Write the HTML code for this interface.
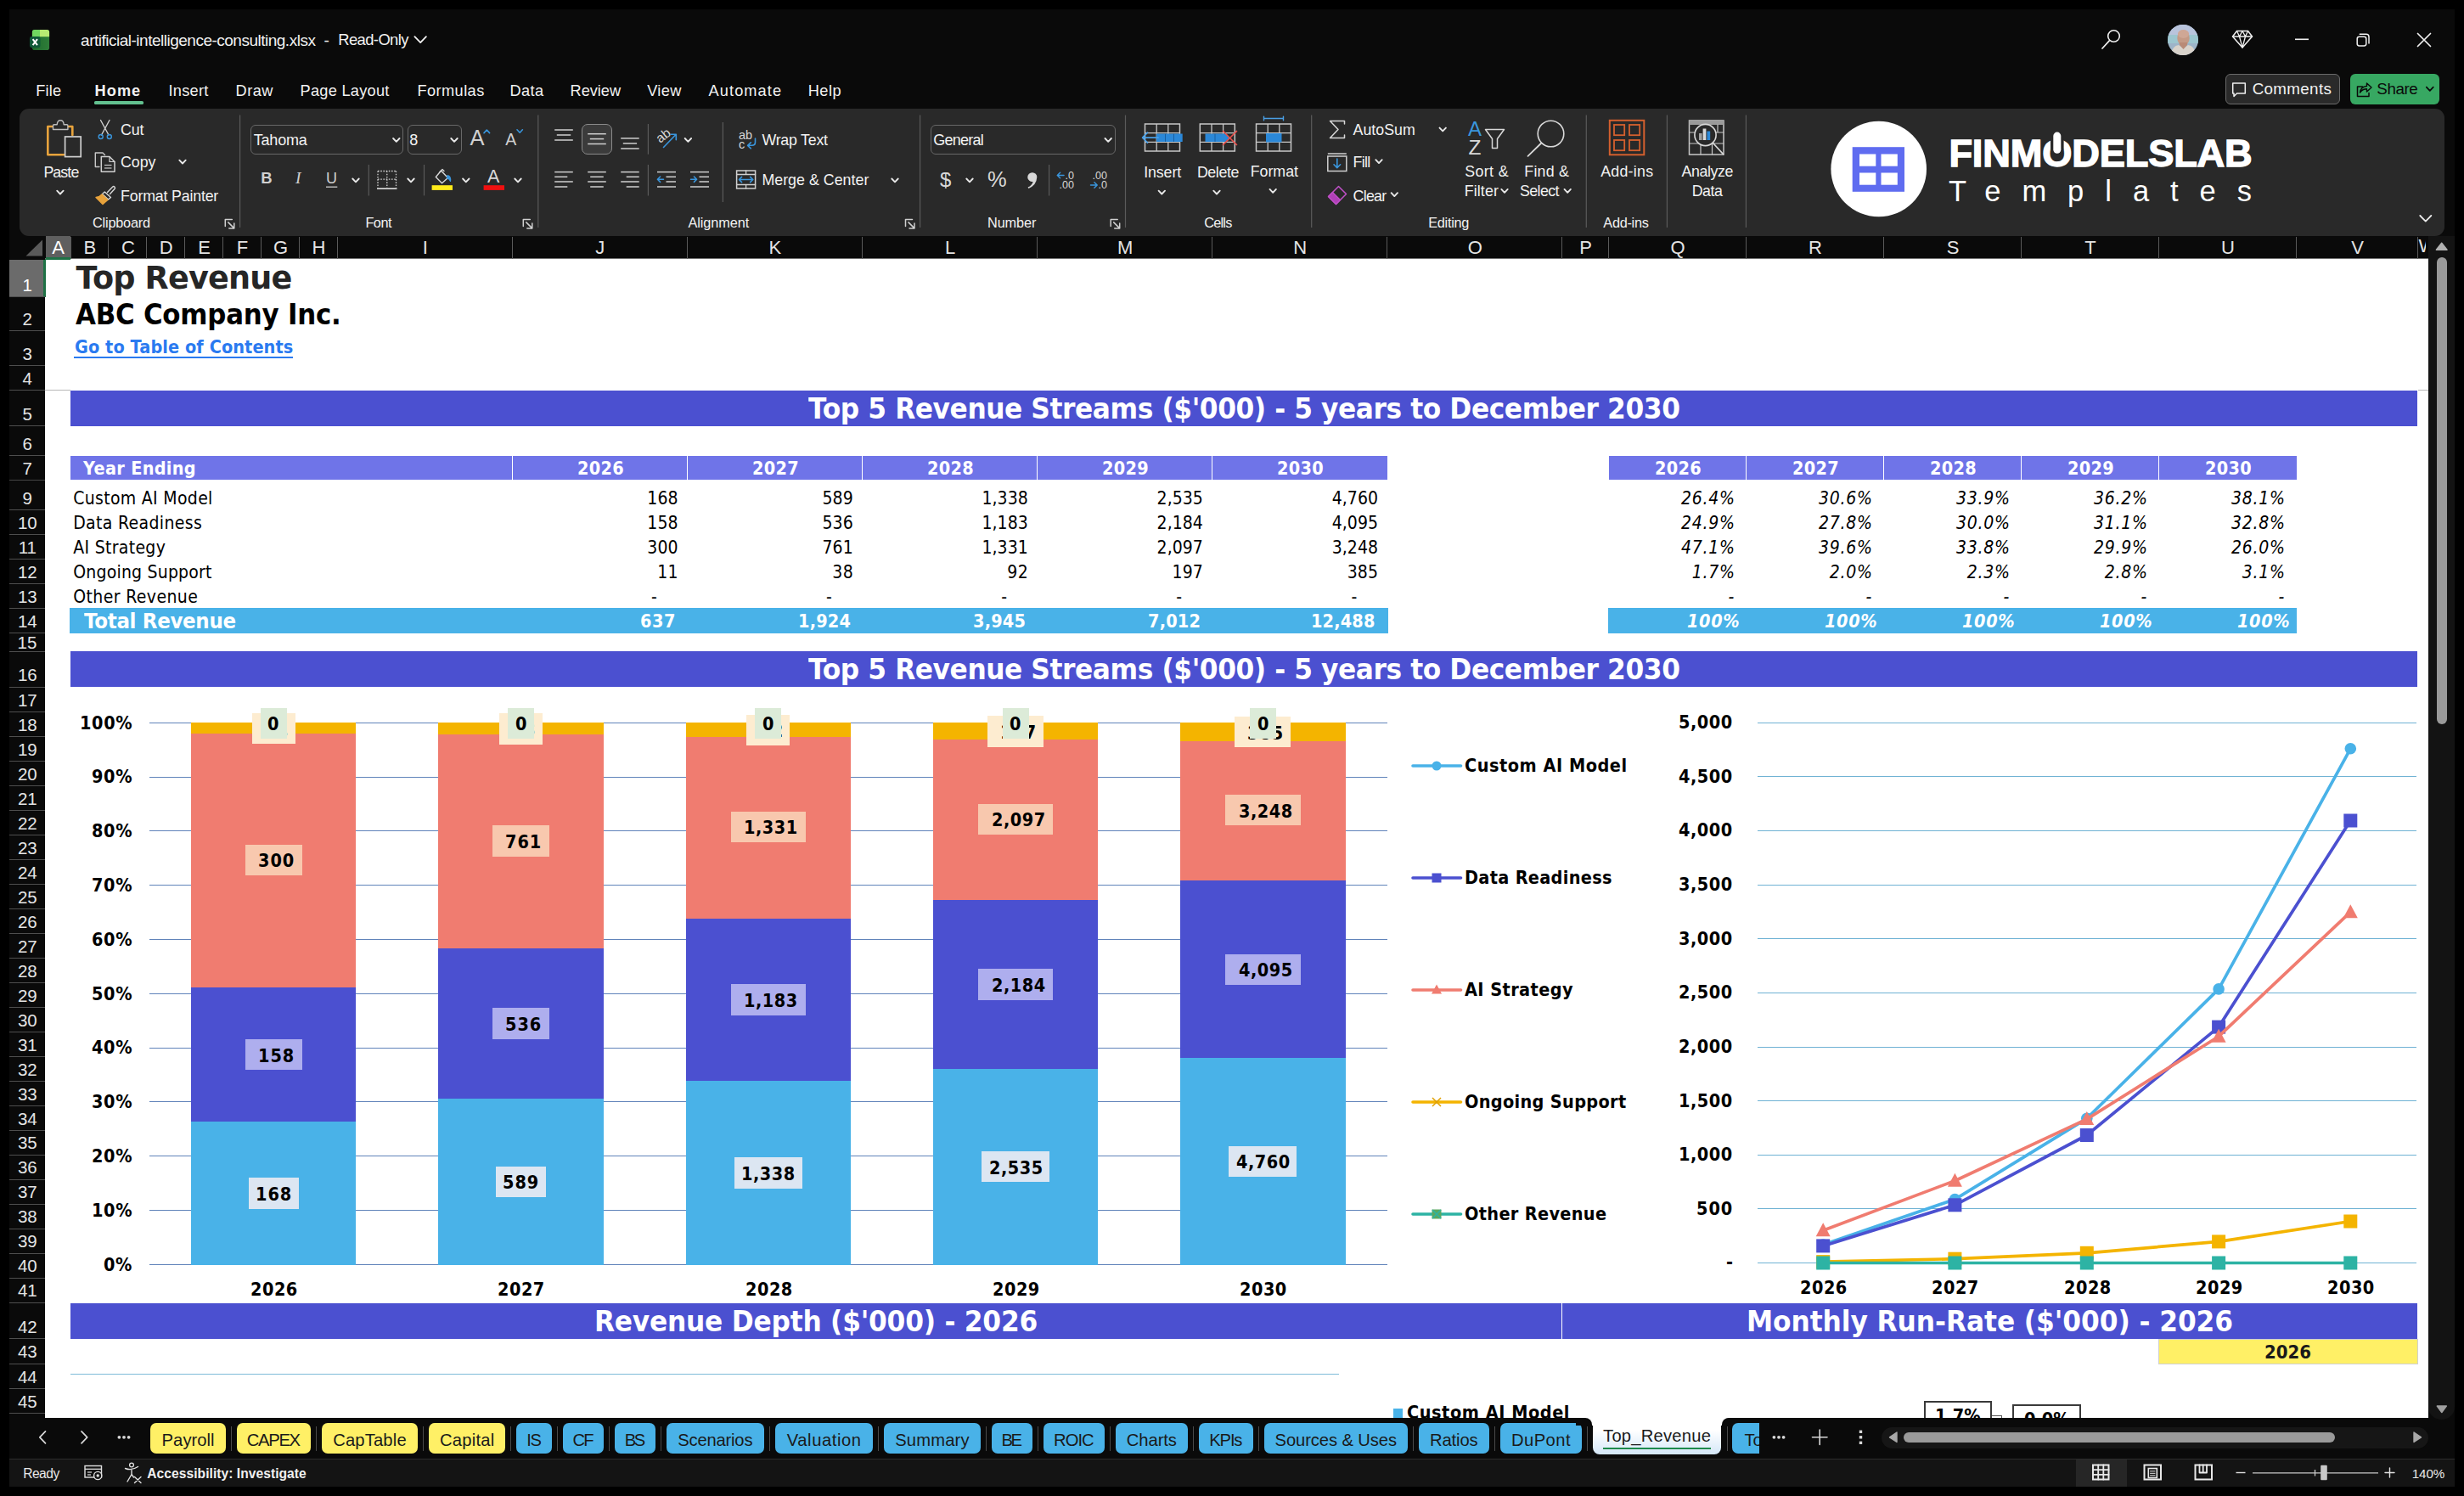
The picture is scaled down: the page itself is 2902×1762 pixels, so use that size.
<!DOCTYPE html>
<html><head><meta charset="utf-8"><title>Top Revenue - Excel</title>
<style>
html,body{margin:0;padding:0;}
body{width:2902px;height:1762px;background:#000;position:relative;overflow:hidden;font-family:"Liberation Sans", sans-serif;}
svg{position:absolute;overflow:visible;}
</style></head><body>
<div style="position:absolute;left:11.00px;top:10.70px;width:2880.00px;height:1740.30px;background:#0a0a0a;"></div>
<svg style="left:0;top:0" width="70" height="70">
<defs><linearGradient id="xg" x1="0" y1="0" x2="1" y2="0"><stop offset="0" stop-color="#1d6b2c"/><stop offset="1" stop-color="#2f7d39"/></linearGradient></defs>
<rect x="37.9" y="34.9" width="20.2" height="24.2" rx="2.8" fill="url(#xg)"/>
<path d="M37.9 43.2V37.7Q37.9 34.9 40.7 34.9H47V43.2Z" fill="#70d860"/>
<path d="M47 34.9H55.3Q58.1 34.9 58.1 37.7V43.2H47Z" fill="#b8ea72"/>
<rect x="35" y="43" width="12.5" height="13.2" rx="2.4" fill="#0f5a38"/>
<path d="M38.6 46.1L44 53.1M44 46.1L38.6 53.1" stroke="#fff" stroke-width="2" fill="none"/></svg>
<span style="position:absolute;left:95.10px;top:37.93px;font-family:&quot;Liberation Sans&quot;, sans-serif;font-size:19px;line-height:1;white-space:pre;color:#f2f2f2;letter-spacing:-0.497px;">artificial-intelligence-consulting.xlsx</span>
<span style="position:absolute;left:381.50px;top:37.93px;font-family:&quot;Liberation Sans&quot;, sans-serif;font-size:19px;line-height:1;white-space:pre;color:#f2f2f2;">-</span>
<span style="position:absolute;left:398.30px;top:38.43px;font-family:&quot;Liberation Sans&quot;, sans-serif;font-size:18.4px;line-height:1;white-space:pre;color:#f2f2f2;letter-spacing:-0.601px;">Read-Only</span>
<div style="position:absolute;left:2621.30px;top:87.40px;width:134.70px;height:35.30px;background:#2a2a2a;border:1.3px solid #6a6a6a;border-radius:6px;box-sizing:border-box;"></div>
<span style="position:absolute;left:2652.70px;top:96.40px;font-family:&quot;Liberation Sans&quot;, sans-serif;font-size:18.8px;line-height:1;white-space:pre;color:#f2f2f2;letter-spacing:0.336px;">Comments</span>
<div style="position:absolute;left:2768.20px;top:87.40px;width:104.70px;height:35.30px;background:#37a862;border-radius:6px;"></div>
<span style="position:absolute;left:2799.30px;top:96.40px;font-family:&quot;Liberation Sans&quot;, sans-serif;font-size:18.8px;line-height:1;white-space:pre;color:#0a0a0a;letter-spacing:-0.425px;">Share</span>
<span style="position:absolute;left:42.30px;top:98.20px;font-family:&quot;Liberation Sans&quot;, sans-serif;font-size:18.2px;line-height:1;white-space:pre;color:#f2f2f2;letter-spacing:0.147px;">File</span>
<span style="position:absolute;left:111.50px;top:98.20px;font-family:&quot;Liberation Sans&quot;, sans-serif;font-size:18.2px;line-height:1;white-space:pre;color:#f2f2f2;font-weight:700;letter-spacing:1.067px;">Home</span>
<span style="position:absolute;left:198.50px;top:98.20px;font-family:&quot;Liberation Sans&quot;, sans-serif;font-size:18.2px;line-height:1;white-space:pre;color:#f2f2f2;letter-spacing:0.267px;">Insert</span>
<span style="position:absolute;left:277.60px;top:98.20px;font-family:&quot;Liberation Sans&quot;, sans-serif;font-size:18.2px;line-height:1;white-space:pre;color:#f2f2f2;letter-spacing:0.487px;">Draw</span>
<span style="position:absolute;left:353.50px;top:98.20px;font-family:&quot;Liberation Sans&quot;, sans-serif;font-size:18.2px;line-height:1;white-space:pre;color:#f2f2f2;letter-spacing:0.278px;">Page Layout</span>
<span style="position:absolute;left:491.40px;top:98.20px;font-family:&quot;Liberation Sans&quot;, sans-serif;font-size:18.2px;line-height:1;white-space:pre;color:#f2f2f2;letter-spacing:0.438px;">Formulas</span>
<span style="position:absolute;left:600.40px;top:98.20px;font-family:&quot;Liberation Sans&quot;, sans-serif;font-size:18.2px;line-height:1;white-space:pre;color:#f2f2f2;letter-spacing:0.395px;">Data</span>
<span style="position:absolute;left:671.60px;top:98.20px;font-family:&quot;Liberation Sans&quot;, sans-serif;font-size:18.2px;line-height:1;white-space:pre;color:#f2f2f2;letter-spacing:-0.040px;">Review</span>
<span style="position:absolute;left:762.20px;top:98.20px;font-family:&quot;Liberation Sans&quot;, sans-serif;font-size:18.2px;line-height:1;white-space:pre;color:#f2f2f2;letter-spacing:0.377px;">View</span>
<span style="position:absolute;left:834.60px;top:98.20px;font-family:&quot;Liberation Sans&quot;, sans-serif;font-size:18.2px;line-height:1;white-space:pre;color:#f2f2f2;letter-spacing:1.080px;">Automate</span>
<span style="position:absolute;left:951.70px;top:98.20px;font-family:&quot;Liberation Sans&quot;, sans-serif;font-size:18.2px;line-height:1;white-space:pre;color:#f2f2f2;letter-spacing:0.523px;">Help</span>
<div style="position:absolute;left:111.20px;top:119.40px;width:58.00px;height:3.20px;background:#62c08f;border-radius:1.6px;"></div>
<div style="position:absolute;left:23.00px;top:127.80px;width:2856.00px;height:150.00px;background:#292929;border-radius:11px;"></div>
<span style="position:absolute;left:51.40px;top:195.34px;font-family:&quot;Liberation Sans&quot;, sans-serif;font-size:17.8px;line-height:1;white-space:pre;color:#f2f2f2;letter-spacing:-0.897px;">Paste</span>
<span style="position:absolute;left:142.00px;top:144.74px;font-family:&quot;Liberation Sans&quot;, sans-serif;font-size:17.8px;line-height:1;white-space:pre;color:#f2f2f2;letter-spacing:-0.091px;">Cut</span>
<span style="position:absolute;left:142.00px;top:183.14px;font-family:&quot;Liberation Sans&quot;, sans-serif;font-size:17.8px;line-height:1;white-space:pre;color:#f2f2f2;letter-spacing:-0.029px;">Copy</span>
<span style="position:absolute;left:142.00px;top:222.64px;font-family:&quot;Liberation Sans&quot;, sans-serif;font-size:17.8px;line-height:1;white-space:pre;color:#f2f2f2;letter-spacing:-0.178px;">Format Painter</span>
<span style="position:absolute;left:109.00px;top:254.21px;font-family:&quot;Liberation Sans&quot;, sans-serif;font-size:16.3px;line-height:1;white-space:pre;color:#f2f2f2;letter-spacing:-0.200px;">Clipboard</span>
<div style="position:absolute;left:295.30px;top:146.50px;width:180.00px;height:35.10px;background:#292929;border:1.2px solid #686868;border-radius:6px;box-sizing:border-box;"></div>
<span style="position:absolute;left:298.70px;top:155.97px;font-family:&quot;Liberation Sans&quot;, sans-serif;font-size:18px;line-height:1;white-space:pre;color:#f2f2f2;letter-spacing:-0.191px;">Tahoma</span>
<div style="position:absolute;left:479.50px;top:146.50px;width:64.10px;height:35.10px;background:#292929;border:1.2px solid #686868;border-radius:6px;box-sizing:border-box;"></div>
<span style="position:absolute;left:482.30px;top:155.97px;font-family:&quot;Liberation Sans&quot;, sans-serif;font-size:18px;line-height:1;white-space:pre;color:#f2f2f2;">8</span>
<span style="position:absolute;left:553.60px;top:149.63px;font-family:&quot;Liberation Sans&quot;, sans-serif;font-size:25.5px;line-height:1;white-space:pre;color:#d0d0d0;">A</span>
<span style="position:absolute;left:595.20px;top:154.70px;font-family:&quot;Liberation Sans&quot;, sans-serif;font-size:19.5px;line-height:1;white-space:pre;color:#d0d0d0;">A</span>
<span style="position:absolute;left:307.30px;top:200.95px;font-family:&quot;Liberation Sans&quot;, sans-serif;font-size:18.5px;line-height:1;white-space:pre;color:#d0d0d0;font-weight:700;">B</span>
<span style="position:absolute;left:348.00px;top:200.10px;font-family:&quot;Liberation Sans&quot;, sans-serif;font-size:19.5px;line-height:1;white-space:pre;color:#d0d0d0;font-style:italic;font-family:&quot;Liberation Serif&quot;,serif;">I</span>
<span style="position:absolute;left:384.00px;top:200.97px;font-family:&quot;Liberation Sans&quot;, sans-serif;font-size:18px;line-height:1;white-space:pre;color:#d0d0d0;">U</span>
<span style="position:absolute;left:574.00px;top:197.81px;font-family:&quot;Liberation Sans&quot;, sans-serif;font-size:21.5px;line-height:1;white-space:pre;color:#d8d8d8;letter-spacing:1.256px;">A</span>
<span style="position:absolute;left:430.40px;top:254.21px;font-family:&quot;Liberation Sans&quot;, sans-serif;font-size:16.3px;line-height:1;white-space:pre;color:#f2f2f2;letter-spacing:-0.498px;">Font</span>
<div style="position:absolute;left:685.20px;top:146.00px;width:35.60px;height:35.80px;background:#3b3b3b;border:1.2px solid #8a8a8a;border-radius:7px;box-sizing:border-box;"></div>
<span style="position:absolute;left:897.40px;top:156.94px;font-family:&quot;Liberation Sans&quot;, sans-serif;font-size:17.8px;line-height:1;white-space:pre;color:#f2f2f2;letter-spacing:-0.221px;">Wrap Text</span>
<span style="position:absolute;left:897.40px;top:204.44px;font-family:&quot;Liberation Sans&quot;, sans-serif;font-size:17.8px;line-height:1;white-space:pre;color:#f2f2f2;letter-spacing:0.035px;">Merge &amp; Center</span>
<span style="position:absolute;left:810.40px;top:254.21px;font-family:&quot;Liberation Sans&quot;, sans-serif;font-size:16.3px;line-height:1;white-space:pre;color:#f2f2f2;letter-spacing:-0.056px;">Alignment</span>
<div style="position:absolute;left:1096.00px;top:146.50px;width:217.50px;height:35.10px;background:#292929;border:1.2px solid #686868;border-radius:6px;box-sizing:border-box;"></div>
<span style="position:absolute;left:1099.20px;top:155.97px;font-family:&quot;Liberation Sans&quot;, sans-serif;font-size:18px;line-height:1;white-space:pre;color:#f2f2f2;letter-spacing:-0.750px;">General</span>
<span style="position:absolute;left:1107.00px;top:199.70px;font-family:&quot;Liberation Sans&quot;, sans-serif;font-size:24px;line-height:1;white-space:pre;color:#d8d8d8;">$</span>
<span style="position:absolute;left:1163.00px;top:198.73px;font-family:&quot;Liberation Sans&quot;, sans-serif;font-size:25.5px;line-height:1;white-space:pre;color:#d8d8d8;letter-spacing:0.812px;">%</span>
<span style="position:absolute;left:1163.00px;top:254.21px;font-family:&quot;Liberation Sans&quot;, sans-serif;font-size:16.3px;line-height:1;white-space:pre;color:#f2f2f2;letter-spacing:-0.104px;">Number</span>
<span style="position:absolute;left:1347.30px;top:195.34px;font-family:&quot;Liberation Sans&quot;, sans-serif;font-size:17.8px;line-height:1;white-space:pre;color:#f2f2f2;letter-spacing:-0.131px;">Insert</span>
<span style="position:absolute;left:1409.90px;top:195.34px;font-family:&quot;Liberation Sans&quot;, sans-serif;font-size:17.8px;line-height:1;white-space:pre;color:#f2f2f2;letter-spacing:-0.384px;">Delete</span>
<span style="position:absolute;left:1472.70px;top:193.54px;font-family:&quot;Liberation Sans&quot;, sans-serif;font-size:17.8px;line-height:1;white-space:pre;color:#f2f2f2;letter-spacing:-0.005px;">Format</span>
<span style="position:absolute;left:1418.20px;top:254.21px;font-family:&quot;Liberation Sans&quot;, sans-serif;font-size:16.3px;line-height:1;white-space:pre;color:#f2f2f2;letter-spacing:-0.761px;">Cells</span>
<span style="position:absolute;left:1593.50px;top:144.74px;font-family:&quot;Liberation Sans&quot;, sans-serif;font-size:17.8px;line-height:1;white-space:pre;color:#f2f2f2;letter-spacing:0.023px;">AutoSum</span>
<span style="position:absolute;left:1593.50px;top:183.14px;font-family:&quot;Liberation Sans&quot;, sans-serif;font-size:17.8px;line-height:1;white-space:pre;color:#f2f2f2;letter-spacing:-0.680px;">Fill</span>
<span style="position:absolute;left:1593.50px;top:222.64px;font-family:&quot;Liberation Sans&quot;, sans-serif;font-size:17.8px;line-height:1;white-space:pre;color:#f2f2f2;letter-spacing:-0.700px;">Clear</span>
<span style="position:absolute;left:1725.20px;top:193.54px;font-family:&quot;Liberation Sans&quot;, sans-serif;font-size:17.8px;line-height:1;white-space:pre;color:#f2f2f2;letter-spacing:0.396px;">Sort &amp;</span>
<span style="position:absolute;left:1724.70px;top:217.44px;font-family:&quot;Liberation Sans&quot;, sans-serif;font-size:17.8px;line-height:1;white-space:pre;color:#f2f2f2;letter-spacing:0.131px;">Filter</span>
<span style="position:absolute;left:1795.30px;top:193.54px;font-family:&quot;Liberation Sans&quot;, sans-serif;font-size:17.8px;line-height:1;white-space:pre;color:#f2f2f2;letter-spacing:0.218px;">Find &amp;</span>
<span style="position:absolute;left:1790.00px;top:217.44px;font-family:&quot;Liberation Sans&quot;, sans-serif;font-size:17.8px;line-height:1;white-space:pre;color:#f2f2f2;letter-spacing:-0.604px;">Select</span>
<span style="position:absolute;left:1682.30px;top:254.21px;font-family:&quot;Liberation Sans&quot;, sans-serif;font-size:16.3px;line-height:1;white-space:pre;color:#f2f2f2;letter-spacing:-0.300px;">Editing</span>
<span style="position:absolute;left:1885.20px;top:193.54px;font-family:&quot;Liberation Sans&quot;, sans-serif;font-size:17.8px;line-height:1;white-space:pre;color:#f2f2f2;letter-spacing:0.258px;">Add-ins</span>
<span style="position:absolute;left:1888.30px;top:254.21px;font-family:&quot;Liberation Sans&quot;, sans-serif;font-size:16.3px;line-height:1;white-space:pre;color:#f2f2f2;letter-spacing:-0.274px;">Add-ins</span>
<span style="position:absolute;left:1980.50px;top:193.54px;font-family:&quot;Liberation Sans&quot;, sans-serif;font-size:17.8px;line-height:1;white-space:pre;color:#f2f2f2;letter-spacing:-0.395px;">Analyze</span>
<span style="position:absolute;left:1992.70px;top:217.44px;font-family:&quot;Liberation Sans&quot;, sans-serif;font-size:17.8px;line-height:1;white-space:pre;color:#f2f2f2;letter-spacing:-0.416px;">Data</span>
<span style="position:absolute;left:2295.40px;top:157.96px;font-family:&quot;Liberation Sans&quot;, sans-serif;font-size:45.2px;line-height:1;white-space:pre;color:#ffffff;font-weight:700;letter-spacing:-0.147px;-webkit-text-stroke:1.4px #fff;">FINMODELSLAB</span>
<span style="position:absolute;left:2295.00px;top:208.31px;font-family:&quot;Liberation Sans&quot;, sans-serif;font-size:34.5px;line-height:1;white-space:pre;color:#ffffff;letter-spacing:24.972px;">Templates</span>
<svg style="left:0;top:0" width="2902" height="1762"><path d="M488.4 43.1L495.2 50.1L501.9 43.1" fill="none" stroke="#f0f0f0" stroke-width="1.8" stroke-linecap="round" stroke-linejoin="round"/><circle cx="2489.5" cy="42.5" r="6.8" fill="none" stroke="#f0f0f0" stroke-width="1.6"/><path d="M2484.6 47.6L2476.0 57.0" stroke="#f0f0f0" stroke-width="1.7" stroke-linecap="round" fill="none"/><defs><clipPath id="av"><circle cx="2571" cy="47" r="18"/></clipPath></defs>
<g clip-path="url(#av)"><rect x="2553" y="29" width="36" height="36" fill="#9db4c8"/><rect x="2553" y="29" width="36" height="12" fill="#b9c4dc"/>
<rect x="2553" y="41" width="36" height="10" fill="#9cc6cf"/>
<ellipse cx="2571.5" cy="45" rx="7.2" ry="9" fill="#c49a86"/><ellipse cx="2571.5" cy="40" rx="6.6" ry="5" fill="#cfa795"/>
<path d="M2556 66Q2558 54 2566 53L2571.5 57L2577 53Q2585 54 2587 66Z" fill="#d9d3cb"/><path d="M2567 53L2571.5 58L2576 53V50H2567Z" fill="#b98a76"/></g><path d="M2634.5 36.5H2647.5L2652.5 43L2641 56L2629.5 43Z" fill="none" stroke="#f0f0f0" stroke-width="1.5" stroke-linejoin="round" stroke-linecap="round" /><path d="M2629.5 43H2652.5M2634.5 36.5L2637.5 43L2641 56L2644.5 43L2647.5 36.5M2637.5 43L2641 36.5L2644.5 43" fill="none" stroke="#f0f0f0" stroke-width="1.3" stroke-linejoin="round" stroke-linecap="round" /><path d="M2703.0 46.3L2719.0 46.3" stroke="#f0f0f0" stroke-width="1.6" stroke-linecap="butt" fill="none"/><rect x="2776.2" y="43.3" width="10.6" height="10.6" rx="2.4" fill="none" stroke="#f0f0f0" stroke-width="1.5"/><path d="M2779.3 40.3H2786.8Q2790 40.3 2790 43.5V51" fill="none" stroke="#f0f0f0" stroke-width="1.5" stroke-linejoin="round" stroke-linecap="round" /><path d="M2847.5 39.5L2862.5 54.5M2862.5 39.5L2847.5 54.5" fill="none" stroke="#f0f0f0" stroke-width="1.7" stroke-linejoin="round" stroke-linecap="round" /><path d="M2629.7 98H2644.3V110H2634.5L2631 113.5V110H2629.7Z" fill="none" stroke="#f0f0f0" stroke-width="1.5" stroke-linejoin="round" stroke-linecap="round" /><path d="M2782.5 102H2776.5V113.5H2790V109.5" fill="none" stroke="#0a0a0a" stroke-width="1.5" stroke-linejoin="round" stroke-linecap="round" /><path d="M2779.5 109Q2780.5 102 2787.5 101.5V98L2793 103L2787.5 108V104.8Q2782.5 104.8 2779.5 109Z" fill="none" stroke="#0a0a0a" stroke-width="1.4" stroke-linejoin="round" stroke-linecap="round" /><path d="M2857.8 102.7L2861.8 106.9L2865.8 102.7" fill="none" stroke="#0a0a0a" stroke-width="1.7" stroke-linecap="round" stroke-linejoin="round"/><path d="M62 149H56.3V182.3H75" fill="none" stroke="#e8a33c" stroke-width="2.6" stroke-linejoin="round" stroke-linecap="round" /><path d="M80.5 149H85.3V159" fill="none" stroke="#e8a33c" stroke-width="2.6" stroke-linejoin="round" stroke-linecap="round" /><path d="M62.5 152.5V148Q62.5 146.8 63.7 146.8H67.2Q67.5 141.8 71.2 141.8Q74.9 141.8 75.2 146.8H78.7Q79.9 146.8 79.9 148V152.5Z" fill="#292929" stroke="#bdbdbd" stroke-width="1.4" stroke-linejoin="round" stroke-linecap="round" /><rect x="76.6" y="161.0" width="18.6" height="23.6" rx="0" fill="#292929" stroke="#d0d0d0" stroke-width="1.7"/><path d="M67.2 224.7L70.9 228.5L74.6 224.7" fill="none" stroke="#e8e8e8" stroke-width="1.9" stroke-linecap="round" stroke-linejoin="round"/><path d="M118.5 141.5L128 159M129 141.5L119.5 159" fill="none" stroke="#d0d0d0" stroke-width="1.4" stroke-linejoin="round" stroke-linecap="round" /><circle cx="118.7" cy="161" r="2.5" fill="none" stroke="#3a96dd" stroke-width="1.4"/><circle cx="128.8" cy="161" r="2.5" fill="none" stroke="#3a96dd" stroke-width="1.4"/><path d="M117 196.5H112.3V180H121L123.5 182.5" fill="none" stroke="#c8c8c8" stroke-width="1.4" stroke-linejoin="round" stroke-linecap="round" /><path d="M119.3 184.5H129L135 190.5V202.3H119.3Z" fill="none" stroke="#d0d0d0" stroke-width="1.5" stroke-linejoin="round" stroke-linecap="round" /><path d="M129 184.5V190.5H135" fill="none" stroke="#d0d0d0" stroke-width="1.2" stroke-linejoin="round" stroke-linecap="round" /><path d="M123.0 194.5L131.5 194.5" stroke="#c8c8c8" stroke-width="1.2" stroke-linecap="butt" fill="none"/><path d="M123.0 198.0L131.5 198.0" stroke="#c8c8c8" stroke-width="1.2" stroke-linecap="butt" fill="none"/><path d="M211.3 188.7L215.0 192.5L218.7 188.7" fill="none" stroke="#e8e8e8" stroke-width="1.9" stroke-linecap="round" stroke-linejoin="round"/><path d="M126.5 226.5L132.5 220.2Q133.8 219 135 220.2Q136 221.4 135 222.6L129.5 228.5" fill="none" stroke="#d8d8d8" stroke-width="1.4" stroke-linejoin="round" stroke-linecap="round" /><path d="M123.3 226L130.5 232.5L127.5 235L120.5 228.5Z" fill="none" stroke="#d8d8d8" stroke-width="1.4" stroke-linejoin="round" stroke-linecap="round" /><path d="M120 229L126.8 235.5L121 240.5L113 232.5Q117.5 232 120 229Z" fill="#e8a33c" stroke="#e8a33c" stroke-width="1.4" stroke-linejoin="round" stroke-linecap="round" /><path d="M265.3 266.4V258.4H273.3" fill="none" stroke="#d0d0d0" stroke-width="1.5" stroke-linejoin="round" stroke-linecap="round" /><path d="M268.8 261.9L275.8 268.9M275.8 262.9V268.9H269.8" fill="none" stroke="#d0d0d0" stroke-width="1.5" stroke-linejoin="round" stroke-linecap="round" /><path d="M282.6 135.6V268" stroke="#5a5a5a" stroke-width="1.2"/><path d="M463.1 163.0L466.8 166.8L470.5 163.0" fill="none" stroke="#e8e8e8" stroke-width="1.9" stroke-linecap="round" stroke-linejoin="round"/><path d="M531.3 163.0L535.0 166.8L538.7 163.0" fill="none" stroke="#e8e8e8" stroke-width="1.9" stroke-linecap="round" stroke-linejoin="round"/><path d="M570.0 156.6L573.3 153.0L576.6 156.6" fill="none" stroke="#3a96dd" stroke-width="1.6" stroke-linecap="round" stroke-linejoin="round"/><path d="M609.0 152.8L612.2 156.2L615.4 152.8" fill="none" stroke="#3a96dd" stroke-width="1.6" stroke-linecap="round" stroke-linejoin="round"/><path d="M384.0 220.2L397.3 220.2" stroke="#d0d0d0" stroke-width="1.3" stroke-linecap="butt" fill="none"/><path d="M415.3 210.5L419.0 214.3L422.7 210.5" fill="none" stroke="#e8e8e8" stroke-width="1.9" stroke-linecap="round" stroke-linejoin="round"/><path d="M434.3 194V230.4" stroke="#5a5a5a" stroke-width="1.2"/><path d="M445 201.5H466.5M445 201.5V221M466.5 201.5V221M455.8 201.5V221M445 211.2H466.5" stroke="#cfcfcf" stroke-width="1.3" stroke-dasharray="1.6 1.6" fill="none"/><path d="M444.0 222.2L467.5 222.2" stroke="#e0e0e0" stroke-width="1.6" stroke-linecap="butt" fill="none"/><path d="M480.3 210.5L484.0 214.3L487.7 210.5" fill="none" stroke="#e8e8e8" stroke-width="1.9" stroke-linecap="round" stroke-linejoin="round"/><path d="M499.5 194V230.4" stroke="#5a5a5a" stroke-width="1.2"/><path d="M519.5 201L527.5 209.5L520.5 215.8L513.3 208.5Z" fill="none" stroke="#d8d8d8" stroke-width="1.4" stroke-linejoin="round" stroke-linecap="round" /><path d="M517.6 203L521 199.5L523 201.5" fill="none" stroke="#d8d8d8" stroke-width="1.3" stroke-linejoin="round" stroke-linecap="round" /><path d="M527 206.5Q531.2 207 530.5 213.5Q529.3 210 526.5 209.8Z" fill="#3a96dd" stroke="#3a96dd" stroke-width="1.2" stroke-linejoin="round" stroke-linecap="round" /><rect x="508.6" y="218.2" width="24.4" height="5.7" fill="#ffeb1a"/><path d="M545.1 210.5L548.8 214.3L552.5 210.5" fill="none" stroke="#e8e8e8" stroke-width="1.9" stroke-linecap="round" stroke-linejoin="round"/><rect x="569.6" y="218.2" width="24.4" height="5.7" fill="#f01010"/><path d="M606.3 210.5L610.0 214.3L613.7 210.5" fill="none" stroke="#e8e8e8" stroke-width="1.9" stroke-linecap="round" stroke-linejoin="round"/><path d="M616.3 266.4V258.4H624.3" fill="none" stroke="#d0d0d0" stroke-width="1.5" stroke-linejoin="round" stroke-linecap="round" /><path d="M619.8 261.9L626.8 268.9M626.8 262.9V268.9H620.8" fill="none" stroke="#d0d0d0" stroke-width="1.5" stroke-linejoin="round" stroke-linecap="round" /><path d="M633.8 135.6V268" stroke="#5a5a5a" stroke-width="1.2"/><path d="M653.2 153.0L674.8 153.0" stroke="#d0d0d0" stroke-width="1.5" stroke-linecap="butt" fill="none"/><path d="M655.8 159.0L672.2 159.0" stroke="#d0d0d0" stroke-width="1.5" stroke-linecap="butt" fill="none"/><path d="M653.2 165.0L674.8 165.0" stroke="#d0d0d0" stroke-width="1.5" stroke-linecap="butt" fill="none"/><path d="M692.2 157.7L713.8 157.7" stroke="#d0d0d0" stroke-width="1.5" stroke-linecap="butt" fill="none"/><path d="M694.8 163.6L711.2 163.6" stroke="#d0d0d0" stroke-width="1.5" stroke-linecap="butt" fill="none"/><path d="M692.2 169.5L713.8 169.5" stroke="#d0d0d0" stroke-width="1.5" stroke-linecap="butt" fill="none"/><path d="M731.2 162.9L752.7 162.9" stroke="#d0d0d0" stroke-width="1.5" stroke-linecap="butt" fill="none"/><path d="M733.8 168.9L750.1 168.9" stroke="#d0d0d0" stroke-width="1.5" stroke-linecap="butt" fill="none"/><path d="M731.2 175.0L752.7 175.0" stroke="#d0d0d0" stroke-width="1.5" stroke-linecap="butt" fill="none"/><path d="M763.4 146V181.8" stroke="#5a5a5a" stroke-width="1.2"/><text transform="translate(777.5,169) rotate(-38)" font-family="Liberation Sans, sans-serif" font-size="15.5" fill="#d8d8d8">ab</text><path d="M781.5 173.5L796 158.5M789.8 158.2H796.3V164.8" fill="none" stroke="#3a96dd" stroke-width="1.6" stroke-linejoin="round" stroke-linecap="round" /><path d="M806.7 163.0L810.4 166.8L814.1 163.0" fill="none" stroke="#e8e8e8" stroke-width="1.9" stroke-linecap="round" stroke-linejoin="round"/><path d="M851.4 144V238" stroke="#5a5a5a" stroke-width="1.2"/><text x="870" y="164" font-family="Liberation Sans, sans-serif" font-size="14.5" fill="#d8d8d8">ab</text><text x="870" y="175.3" font-family="Liberation Sans, sans-serif" font-size="14.5" fill="#d8d8d8">c</text><path d="M889.5 163V167.5Q889.5 171.3 885.5 171.3H881M884.3 167.8L880.6 171.3L884.3 174.8" fill="none" stroke="#3a96dd" stroke-width="1.6" stroke-linejoin="round" stroke-linecap="round" /><path d="M653.2 202.6L674.8 202.6" stroke="#d0d0d0" stroke-width="1.5" stroke-linecap="butt" fill="none"/><path d="M692.2 202.6L713.8 202.6" stroke="#d0d0d0" stroke-width="1.5" stroke-linecap="butt" fill="none"/><path d="M731.2 202.6L752.7 202.6" stroke="#d0d0d0" stroke-width="1.5" stroke-linecap="butt" fill="none"/><path d="M653.2 208.3L668.3 208.3" stroke="#d0d0d0" stroke-width="1.5" stroke-linecap="butt" fill="none"/><path d="M695.2 208.3L710.8 208.3" stroke="#d0d0d0" stroke-width="1.5" stroke-linecap="butt" fill="none"/><path d="M737.7 208.3L752.7 208.3" stroke="#d0d0d0" stroke-width="1.5" stroke-linecap="butt" fill="none"/><path d="M653.2 214.0L674.8 214.0" stroke="#d0d0d0" stroke-width="1.5" stroke-linecap="butt" fill="none"/><path d="M692.2 214.0L713.8 214.0" stroke="#d0d0d0" stroke-width="1.5" stroke-linecap="butt" fill="none"/><path d="M731.2 214.0L752.7 214.0" stroke="#d0d0d0" stroke-width="1.5" stroke-linecap="butt" fill="none"/><path d="M653.2 220.0L668.3 220.0" stroke="#d0d0d0" stroke-width="1.5" stroke-linecap="butt" fill="none"/><path d="M695.2 220.0L710.8 220.0" stroke="#d0d0d0" stroke-width="1.5" stroke-linecap="butt" fill="none"/><path d="M737.7 220.0L752.7 220.0" stroke="#d0d0d0" stroke-width="1.5" stroke-linecap="butt" fill="none"/><path d="M763.4 194V230.4" stroke="#5a5a5a" stroke-width="1.2"/><path d="M774.0 202.6L796.0 202.6" stroke="#d0d0d0" stroke-width="1.5" stroke-linecap="butt" fill="none"/><path d="M784.5 208.3L796.0 208.3" stroke="#d0d0d0" stroke-width="1.5" stroke-linecap="butt" fill="none"/><path d="M784.5 214.0L796.0 214.0" stroke="#d0d0d0" stroke-width="1.5" stroke-linecap="butt" fill="none"/><path d="M774.0 220.0L796.0 220.0" stroke="#d0d0d0" stroke-width="1.5" stroke-linecap="butt" fill="none"/><path d="M781.5 211.2H774.5M777.6 208L774.4 211.2L777.6 214.4" fill="none" stroke="#3a96dd" stroke-width="1.5" stroke-linejoin="round" stroke-linecap="round" /><path d="M813.0 202.6L835.0 202.6" stroke="#d0d0d0" stroke-width="1.5" stroke-linecap="butt" fill="none"/><path d="M823.5 208.3L835.0 208.3" stroke="#d0d0d0" stroke-width="1.5" stroke-linecap="butt" fill="none"/><path d="M823.5 214.0L835.0 214.0" stroke="#d0d0d0" stroke-width="1.5" stroke-linecap="butt" fill="none"/><path d="M813.0 220.0L835.0 220.0" stroke="#d0d0d0" stroke-width="1.5" stroke-linecap="butt" fill="none"/><path d="M813.5 211.2H820.5M817.4 208L820.6 211.2L817.4 214.4" fill="none" stroke="#3a96dd" stroke-width="1.5" stroke-linejoin="round" stroke-linecap="round" /><rect x="867.6" y="201.0" width="22.0" height="21.0" rx="0" fill="none" stroke="#d0d0d0" stroke-width="1.5"/><path d="M867.6 205.5H889.6M867.6 217.5H889.6M878.6 201V205.5M878.6 217.5V222" fill="none" stroke="#d0d0d0" stroke-width="1.3" stroke-linejoin="round" stroke-linecap="round" /><path d="M870.5 211.5H886.7M873.6 208.4L870.4 211.5L873.6 214.6M883.6 208.4L886.8 211.5L883.6 214.6" fill="none" stroke="#3a96dd" stroke-width="1.6" stroke-linejoin="round" stroke-linecap="round" /><path d="M1050.3 210.5L1054.0 214.3L1057.7 210.5" fill="none" stroke="#e8e8e8" stroke-width="1.9" stroke-linecap="round" stroke-linejoin="round"/><path d="M1066.5 266.4V258.4H1074.5" fill="none" stroke="#d0d0d0" stroke-width="1.5" stroke-linejoin="round" stroke-linecap="round" /><path d="M1070.0 261.9L1077.0 268.9M1077.0 262.9V268.9H1071.0" fill="none" stroke="#d0d0d0" stroke-width="1.5" stroke-linejoin="round" stroke-linecap="round" /><path d="M1083.6 135.6V268" stroke="#5a5a5a" stroke-width="1.2"/><path d="M1301.5 163.0L1305.2 166.8L1308.9 163.0" fill="none" stroke="#e8e8e8" stroke-width="1.9" stroke-linecap="round" stroke-linejoin="round"/><path d="M1138.3 210.5L1142.0 214.3L1145.7 210.5" fill="none" stroke="#e8e8e8" stroke-width="1.9" stroke-linecap="round" stroke-linejoin="round"/><path d="M1216 203.2A5.4 5.4 0 1 0 1216.6 213.9Q1215.6 218.3 1210.6 220.6L1211.4 221.9Q1220.8 218.4 1221.3 208.6A5.3 5.3 0 0 0 1216 203.2Z" fill="#d8d8d8" stroke="none" stroke-width="0" stroke-linejoin="round" stroke-linecap="round" /><path d="M1235.6 194V230.4" stroke="#5a5a5a" stroke-width="1.2"/><path d="M1245.5 206.5H1253M1248.6 203.3L1245.3 206.5L1248.6 209.7" fill="none" stroke="#3a96dd" stroke-width="1.5" stroke-linejoin="round" stroke-linecap="round" /><text x="1254.5" y="210.5" font-family="Liberation Sans, sans-serif" font-size="12.5" fill="#d8d8d8">.0</text><text x="1247.5" y="222.3" font-family="Liberation Sans, sans-serif" font-size="12.5" fill="#d8d8d8">.00</text><text x="1286.5" y="210.5" font-family="Liberation Sans, sans-serif" font-size="12.5" fill="#d8d8d8">.00</text><text x="1293.5" y="222.3" font-family="Liberation Sans, sans-serif" font-size="12.5" fill="#d8d8d8">.0</text><path d="M1284.5 218H1292M1288.9 214.8L1292.2 218L1288.9 221.2" fill="none" stroke="#3a96dd" stroke-width="1.5" stroke-linejoin="round" stroke-linecap="round" /><path d="M1308.2 266.4V258.4H1316.2" fill="none" stroke="#d0d0d0" stroke-width="1.5" stroke-linejoin="round" stroke-linecap="round" /><path d="M1311.7 261.9L1318.7 268.9M1318.7 262.9V268.9H1312.7" fill="none" stroke="#d0d0d0" stroke-width="1.5" stroke-linejoin="round" stroke-linecap="round" /><path d="M1325.5 135.6V268" stroke="#5a5a5a" stroke-width="1.2"/><rect x="1348.5" y="146.0" width="41.0" height="32.0" rx="0" fill="none" stroke="#c8c8c8" stroke-width="1.5"/><path d="M1362.2 146.0L1362.2 178.0" stroke="#c8c8c8" stroke-width="1.3" stroke-linecap="butt" fill="none"/><path d="M1375.8 146.0L1375.8 178.0" stroke="#c8c8c8" stroke-width="1.3" stroke-linecap="butt" fill="none"/><path d="M1348.5 156.7L1389.5 156.7" stroke="#c8c8c8" stroke-width="1.3" stroke-linecap="butt" fill="none"/><path d="M1348.5 167.3L1389.5 167.3" stroke="#c8c8c8" stroke-width="1.3" stroke-linecap="butt" fill="none"/><rect x="1362" y="157.5" width="30.7" height="9.5" fill="#2b88d8"/><path d="M1372.5 157.5V167M1382.5 157.5V167" stroke="#1a5fa0" stroke-width="1"/><path d="M1346 162.2H1364M1351.5 156.2L1345.6 162.2L1351.5 168.2" fill="none" stroke="#4aa0e6" stroke-width="1.7" stroke-linejoin="round" stroke-linecap="round" /><path d="M1364.6 224.7L1368.3 228.5L1372.0 224.7" fill="none" stroke="#e8e8e8" stroke-width="1.9" stroke-linecap="round" stroke-linejoin="round"/><rect x="1413.3" y="146.0" width="41.0" height="32.0" rx="0" fill="none" stroke="#c8c8c8" stroke-width="1.5"/><path d="M1427.0 146.0L1427.0 178.0" stroke="#c8c8c8" stroke-width="1.3" stroke-linecap="butt" fill="none"/><path d="M1440.6 146.0L1440.6 178.0" stroke="#c8c8c8" stroke-width="1.3" stroke-linecap="butt" fill="none"/><path d="M1413.3 156.7L1454.3 156.7" stroke="#c8c8c8" stroke-width="1.3" stroke-linecap="butt" fill="none"/><path d="M1413.3 167.3L1454.3 167.3" stroke="#c8c8c8" stroke-width="1.3" stroke-linecap="butt" fill="none"/><rect x="1419.5" y="157.5" width="24" height="9.5" fill="#2b88d8"/><path d="M1431 157.5V167" stroke="#1a5fa0" stroke-width="1"/><path d="M1443 157.2L1449 162.2L1443 167.2Z" fill="#2b88d8"/><path d="M1440.5 154.5L1456.5 170.5M1456.5 154.5L1440.5 170.5" fill="none" stroke="#e8504c" stroke-width="1.7" stroke-linejoin="round" stroke-linecap="round" /><path d="M1429.3 224.7L1433.0 228.5L1436.7 224.7" fill="none" stroke="#e8e8e8" stroke-width="1.9" stroke-linecap="round" stroke-linejoin="round"/><rect x="1479.5" y="146.0" width="41.0" height="32.0" rx="0" fill="none" stroke="#c8c8c8" stroke-width="1.5"/><path d="M1493.2 146.0L1493.2 178.0" stroke="#c8c8c8" stroke-width="1.3" stroke-linecap="butt" fill="none"/><path d="M1506.8 146.0L1506.8 178.0" stroke="#c8c8c8" stroke-width="1.3" stroke-linecap="butt" fill="none"/><path d="M1479.5 156.7L1520.5 156.7" stroke="#c8c8c8" stroke-width="1.3" stroke-linecap="butt" fill="none"/><path d="M1479.5 167.3L1520.5 167.3" stroke="#c8c8c8" stroke-width="1.3" stroke-linecap="butt" fill="none"/><rect x="1491" y="157" width="18.5" height="10.5" fill="#2b88d8"/><path d="M1488.5 139.5H1511.5M1488.5 137.3V141.7M1511.5 137.3V141.7" fill="none" stroke="#4aa0e6" stroke-width="1.4" stroke-linejoin="round" stroke-linecap="round" /><path d="M1495.5 222.9L1499.2 226.8L1502.9 222.9" fill="none" stroke="#e8e8e8" stroke-width="1.9" stroke-linecap="round" stroke-linejoin="round"/><path d="M1544.7 135.6V268" stroke="#5a5a5a" stroke-width="1.2"/><path d="M1583.5 146V142.5H1566.5L1576 152.5L1566.5 162.5H1583.5V159" fill="none" stroke="#d8d8d8" stroke-width="1.5" stroke-linejoin="round" stroke-linecap="round" /><path d="M1695.5 150.6L1699.2 154.4L1702.9 150.6" fill="none" stroke="#e8e8e8" stroke-width="1.9" stroke-linecap="round" stroke-linejoin="round"/><rect x="1563.8" y="184.0" width="22.0" height="17.5" rx="0" fill="none" stroke="#d0d0d0" stroke-width="1.5"/><path d="M1563.8 181.0L1585.8 181.0" stroke="#d0d0d0" stroke-width="1.5" stroke-linecap="butt" fill="none"/><path d="M1574.8 187V197.5M1571 193.8L1574.8 197.6L1578.6 193.8" fill="none" stroke="#3a96dd" stroke-width="1.6" stroke-linejoin="round" stroke-linecap="round" /><path d="M1620.3 188.2L1624.0 192.1L1627.7 188.2" fill="none" stroke="#e8e8e8" stroke-width="1.9" stroke-linecap="round" stroke-linejoin="round"/><path d="M1576.5 219.5L1585.5 228.5L1573.5 240.5L1564.5 231.5Z" fill="none" stroke="#c050c8" stroke-width="1.5" stroke-linejoin="round" stroke-linecap="round" /><path d="M1569.5 226.5L1578.5 235.5L1573.5 240.5L1564.5 231.5Z" fill="#b040b8" stroke="#c050c8" stroke-width="1.2" stroke-linejoin="round" stroke-linecap="round" /><path d="M1638.6 227.2L1642.3 231.1L1646.0 227.2" fill="none" stroke="#e8e8e8" stroke-width="1.9" stroke-linecap="round" stroke-linejoin="round"/><text x="1729" y="160.2" font-family="Liberation Sans, sans-serif" font-size="24" fill="#3a96dd">A</text><text x="1729.5" y="181.8" font-family="Liberation Sans, sans-serif" font-size="24.5" fill="#d8d8d8">Z</text><path d="M1749.5 152.5H1771.5L1763.5 163.5V174.5H1757.5V163.5Z" fill="none" stroke="#d8d8d8" stroke-width="1.5" stroke-linejoin="round" stroke-linecap="round" /><path d="M1768.3 222.9L1772.0 226.8L1775.7 222.9" fill="none" stroke="#e8e8e8" stroke-width="1.9" stroke-linecap="round" stroke-linejoin="round"/><circle cx="1826.5" cy="157.5" r="15.3" fill="none" stroke="#d8d8d8" stroke-width="1.6"/><path d="M1815.3 168.5L1799.5 183.8" stroke="#d8d8d8" stroke-width="1.8" stroke-linecap="round" fill="none"/><path d="M1842.5 222.9L1846.2 226.8L1849.9 222.9" fill="none" stroke="#e8e8e8" stroke-width="1.9" stroke-linecap="round" stroke-linejoin="round"/><path d="M1868.3 135.6V268" stroke="#5a5a5a" stroke-width="1.2"/><rect x="1895.8" y="141.8" width="40.5" height="40.5" rx="0" fill="none" stroke="#d4602e" stroke-width="2"/><rect x="1901.0" y="147.0" width="12.2" height="12.2" rx="0" fill="none" stroke="#d4602e" stroke-width="1.8"/><rect x="1919.0" y="147.0" width="12.2" height="12.2" rx="0" fill="none" stroke="#d4602e" stroke-width="1.8"/><rect x="1901.0" y="165.0" width="12.2" height="12.2" rx="0" fill="none" stroke="#d4602e" stroke-width="1.8"/><rect x="1919.0" y="165.0" width="12.2" height="12.2" rx="0" fill="none" stroke="#d4602e" stroke-width="1.8"/><path d="M1963.4 135.6V268" stroke="#5a5a5a" stroke-width="1.2"/><rect x="1989.5" y="142.0" width="40.5" height="40.0" rx="0" fill="none" stroke="#c8c8c8" stroke-width="1.5"/><rect x="1989.5" y="142" width="40.5" height="5" fill="#9a9a9a"/><path d="M1989.5 156H2030M1989.5 169H2030M2003 169V182M2016.5 169V182M2023 147V156" fill="none" stroke="#c8c8c8" stroke-width="1.2" stroke-linejoin="round" stroke-linecap="round" /><circle cx="2008.5" cy="159" r="12.6" fill="#292929" stroke="#d8d8d8" stroke-width="1.6"/><rect x="2001" y="157" width="3.6" height="8" fill="#a0a0a0"/><rect x="2005.6" y="151.5" width="3.8" height="13.5" fill="#d8d8d8"/><rect x="2010.4" y="154.5" width="3.8" height="10.5" fill="#2b88d8"/><path d="M2017.5 168.5L2029.5 181.5" stroke="#d8d8d8" stroke-width="1.8" stroke-linecap="round" fill="none"/><path d="M2056.4 135.6V268" stroke="#5a5a5a" stroke-width="1.2"/><circle cx="2212.7" cy="199" r="56.3" fill="#ffffff"/><rect x="2181.7" y="173.2" width="61.3" height="52.6" fill="#5f6cf0"/><rect x="2190" y="181.5" width="19.3" height="14.2" fill="#ffffff"/><rect x="2215.5" y="181.5" width="19.3" height="14.2" fill="#ffffff"/><rect x="2190" y="203.5" width="19.3" height="14.2" fill="#ffffff"/><rect x="2215.5" y="203.5" width="19.3" height="14.2" fill="#ffffff"/><g transform="translate(2422.8,0)"><rect x="-7.8" y="153" width="15.6" height="30" rx="7.8" fill="#292929"/><rect x="-4.5" y="155.6" width="9" height="25.2" rx="4.5" fill="#ffffff"/></g><path d="M2850.3 254.0L2856.8 260.6L2863.3 254.0" fill="none" stroke="#e8e8e8" stroke-width="1.8" stroke-linecap="round" stroke-linejoin="round"/></svg>
<div style="position:absolute;left:53.30px;top:305.00px;width:2806.90px;height:1365.30px;background:#ffffff;"></div>
<div style="position:absolute;left:52.30px;top:304.20px;width:30.70px;height:45.60px;background:transparent;border:2px solid #1e7145;border-right:none;border-bottom:none;box-sizing:border-box;"></div>
<div style="position:absolute;left:53.30px;top:459.00px;width:29.70px;height:1.00px;background:#b8b8b8;"></div>
<div style="position:absolute;left:2847.50px;top:459.00px;width:12.70px;height:1.00px;background:#b8b8b8;"></div>
<span style="position:absolute;left:89.60px;top:310.34px;font-family:&quot;DejaVu Sans&quot;, &quot;Liberation Sans&quot;, sans-serif;font-size:36.6px;line-height:1;white-space:pre;color:#262626;font-weight:700;letter-spacing:-0.787px;">Top Revenue</span>
<span style="position:absolute;left:89.20px;top:353.57px;font-family:&quot;DejaVu Sans&quot;, &quot;Liberation Sans&quot;, sans-serif;font-size:33.6px;line-height:1;white-space:pre;color:#000000;font-weight:700;letter-spacing:-0.262px;transform:scaleX(0.92);transform-origin:0 0;">ABC Company Inc.</span>
<span style="position:absolute;left:87.50px;top:399.43px;font-family:&quot;DejaVu Sans&quot;, &quot;Liberation Sans&quot;, sans-serif;font-size:21px;line-height:1;white-space:pre;color:#2a7af0;font-weight:700;letter-spacing:0.083px;transform:scaleX(0.92);transform-origin:0 0;">Go to Table of Contents</span>
<div style="position:absolute;left:87.30px;top:420.10px;width:257.60px;height:1.80px;background:#2a7af0;"></div>
<div style="position:absolute;left:82.70px;top:460.00px;width:2764.80px;height:42.00px;background:#4b50d0;"></div>
<span style="position:absolute;left:951.64px;top:464.24px;font-family:&quot;DejaVu Sans&quot;, &quot;Liberation Sans&quot;, sans-serif;font-size:34px;line-height:1;white-space:pre;color:#ffffff;font-weight:700;letter-spacing:-0.449px;transform:scaleX(0.92);transform-origin:0 0;">Top 5 Revenue Streams ($&#x27;000) - 5 years to December 2030</span>
<div style="position:absolute;left:82.70px;top:767.00px;width:2764.80px;height:42.00px;background:#4b50d0;"></div>
<span style="position:absolute;left:951.64px;top:771.24px;font-family:&quot;DejaVu Sans&quot;, &quot;Liberation Sans&quot;, sans-serif;font-size:34px;line-height:1;white-space:pre;color:#ffffff;font-weight:700;letter-spacing:-0.449px;transform:scaleX(0.92);transform-origin:0 0;">Top 5 Revenue Streams ($&#x27;000) - 5 years to December 2030</span>
<div style="position:absolute;left:82.70px;top:1535.00px;width:1756.40px;height:42.00px;background:#4b50d0;"></div>
<span style="position:absolute;left:699.79px;top:1539.24px;font-family:&quot;DejaVu Sans&quot;, &quot;Liberation Sans&quot;, sans-serif;font-size:34px;line-height:1;white-space:pre;color:#ffffff;font-weight:700;letter-spacing:-0.244px;transform:scaleX(0.92);transform-origin:0 0;">Revenue Depth ($&#x27;000) - 2026</span>
<div style="position:absolute;left:1840.10px;top:1535.00px;width:1007.40px;height:42.00px;background:#4b50d0;"></div>
<span style="position:absolute;left:2057.27px;top:1539.24px;font-family:&quot;DejaVu Sans&quot;, &quot;Liberation Sans&quot;, sans-serif;font-size:34px;line-height:1;white-space:pre;color:#ffffff;font-weight:700;letter-spacing:-0.071px;transform:scaleX(0.92);transform-origin:0 0;">Monthly Run-Rate ($&#x27;000) - 2026</span>
<div style="position:absolute;left:82.70px;top:537.00px;width:1551.10px;height:28.00px;background:#6f74e8;"></div>
<div style="position:absolute;left:1894.50px;top:537.00px;width:810.00px;height:28.00px;background:#6f74e8;"></div>
<div style="position:absolute;left:602.70px;top:537.00px;width:1.20px;height:28.00px;background:#ffffff;"></div>
<div style="position:absolute;left:808.80px;top:537.00px;width:1.20px;height:28.00px;background:#ffffff;"></div>
<div style="position:absolute;left:1014.90px;top:537.00px;width:1.20px;height:28.00px;background:#ffffff;"></div>
<div style="position:absolute;left:1221.00px;top:537.00px;width:1.20px;height:28.00px;background:#ffffff;"></div>
<div style="position:absolute;left:1427.10px;top:537.00px;width:1.20px;height:28.00px;background:#ffffff;"></div>
<div style="position:absolute;left:2055.90px;top:537.00px;width:1.20px;height:28.00px;background:#ffffff;"></div>
<div style="position:absolute;left:2217.90px;top:537.00px;width:1.20px;height:28.00px;background:#ffffff;"></div>
<div style="position:absolute;left:2379.90px;top:537.00px;width:1.20px;height:28.00px;background:#ffffff;"></div>
<div style="position:absolute;left:2541.90px;top:537.00px;width:1.20px;height:28.00px;background:#ffffff;"></div>
<span style="position:absolute;left:97.90px;top:541.63px;font-family:&quot;DejaVu Sans&quot;, &quot;Liberation Sans&quot;, sans-serif;font-size:21px;line-height:1;white-space:pre;color:#fff;font-weight:700;letter-spacing:0.335px;transform:scaleX(0.92);transform-origin:0 0;">Year Ending</span>
<span style="position:absolute;left:679.70px;top:541.63px;font-family:&quot;DejaVu Sans&quot;, &quot;Liberation Sans&quot;, sans-serif;font-size:21px;line-height:1;white-space:pre;color:#fff;font-weight:700;letter-spacing:0.332px;transform:scaleX(0.92);transform-origin:0 0;">2026</span>
<span style="position:absolute;left:885.80px;top:541.63px;font-family:&quot;DejaVu Sans&quot;, &quot;Liberation Sans&quot;, sans-serif;font-size:21px;line-height:1;white-space:pre;color:#fff;font-weight:700;letter-spacing:0.332px;transform:scaleX(0.92);transform-origin:0 0;">2027</span>
<span style="position:absolute;left:1091.90px;top:541.63px;font-family:&quot;DejaVu Sans&quot;, &quot;Liberation Sans&quot;, sans-serif;font-size:21px;line-height:1;white-space:pre;color:#fff;font-weight:700;letter-spacing:0.332px;transform:scaleX(0.92);transform-origin:0 0;">2028</span>
<span style="position:absolute;left:1298.00px;top:541.63px;font-family:&quot;DejaVu Sans&quot;, &quot;Liberation Sans&quot;, sans-serif;font-size:21px;line-height:1;white-space:pre;color:#fff;font-weight:700;letter-spacing:0.332px;transform:scaleX(0.92);transform-origin:0 0;">2029</span>
<span style="position:absolute;left:1504.10px;top:541.63px;font-family:&quot;DejaVu Sans&quot;, &quot;Liberation Sans&quot;, sans-serif;font-size:21px;line-height:1;white-space:pre;color:#fff;font-weight:700;letter-spacing:0.332px;transform:scaleX(0.92);transform-origin:0 0;">2030</span>
<span style="position:absolute;left:1948.85px;top:541.63px;font-family:&quot;DejaVu Sans&quot;, &quot;Liberation Sans&quot;, sans-serif;font-size:21px;line-height:1;white-space:pre;color:#fff;font-weight:700;letter-spacing:0.332px;transform:scaleX(0.92);transform-origin:0 0;">2026</span>
<span style="position:absolute;left:2110.85px;top:541.63px;font-family:&quot;DejaVu Sans&quot;, &quot;Liberation Sans&quot;, sans-serif;font-size:21px;line-height:1;white-space:pre;color:#fff;font-weight:700;letter-spacing:0.332px;transform:scaleX(0.92);transform-origin:0 0;">2027</span>
<span style="position:absolute;left:2272.85px;top:541.63px;font-family:&quot;DejaVu Sans&quot;, &quot;Liberation Sans&quot;, sans-serif;font-size:21px;line-height:1;white-space:pre;color:#fff;font-weight:700;letter-spacing:0.332px;transform:scaleX(0.92);transform-origin:0 0;">2028</span>
<span style="position:absolute;left:2434.85px;top:541.63px;font-family:&quot;DejaVu Sans&quot;, &quot;Liberation Sans&quot;, sans-serif;font-size:21px;line-height:1;white-space:pre;color:#fff;font-weight:700;letter-spacing:0.332px;transform:scaleX(0.92);transform-origin:0 0;">2029</span>
<span style="position:absolute;left:2596.85px;top:541.63px;font-family:&quot;DejaVu Sans&quot;, &quot;Liberation Sans&quot;, sans-serif;font-size:21px;line-height:1;white-space:pre;color:#fff;font-weight:700;letter-spacing:0.332px;transform:scaleX(0.92);transform-origin:0 0;">2030</span>
<span style="position:absolute;left:86.20px;top:576.53px;font-family:&quot;DejaVu Sans Condensed&quot;, &quot;DejaVu Sans&quot;, &quot;Liberation Sans&quot;, sans-serif;font-size:21px;line-height:1;white-space:pre;color:#000;letter-spacing:0.326px;">Custom AI Model</span>
<span style="position:absolute;left:762.28px;top:576.53px;font-family:&quot;DejaVu Sans Condensed&quot;, &quot;DejaVu Sans&quot;, &quot;Liberation Sans&quot;, sans-serif;font-size:21px;line-height:1;white-space:pre;color:#000;letter-spacing:0.129px;">168</span>
<span style="position:absolute;left:968.38px;top:576.53px;font-family:&quot;DejaVu Sans Condensed&quot;, &quot;DejaVu Sans&quot;, &quot;Liberation Sans&quot;, sans-serif;font-size:21px;line-height:1;white-space:pre;color:#000;letter-spacing:0.129px;">589</span>
<span style="position:absolute;left:1156.46px;top:576.53px;font-family:&quot;DejaVu Sans Condensed&quot;, &quot;DejaVu Sans&quot;, &quot;Liberation Sans&quot;, sans-serif;font-size:21px;line-height:1;white-space:pre;color:#000;letter-spacing:0.064px;">1,338</span>
<span style="position:absolute;left:1362.56px;top:576.53px;font-family:&quot;DejaVu Sans Condensed&quot;, &quot;DejaVu Sans&quot;, &quot;Liberation Sans&quot;, sans-serif;font-size:21px;line-height:1;white-space:pre;color:#000;letter-spacing:0.064px;">2,535</span>
<span style="position:absolute;left:1568.66px;top:576.53px;font-family:&quot;DejaVu Sans Condensed&quot;, &quot;DejaVu Sans&quot;, &quot;Liberation Sans&quot;, sans-serif;font-size:21px;line-height:1;white-space:pre;color:#000;letter-spacing:0.064px;">4,760</span>
<span style="position:absolute;left:1980.08px;top:576.53px;font-family:&quot;DejaVu Sans Condensed&quot;, &quot;DejaVu Sans&quot;, &quot;Liberation Sans&quot;, sans-serif;font-size:21px;line-height:1;white-space:pre;color:#000;font-style:italic;letter-spacing:0.700px;">26.4%</span>
<span style="position:absolute;left:2142.08px;top:576.53px;font-family:&quot;DejaVu Sans Condensed&quot;, &quot;DejaVu Sans&quot;, &quot;Liberation Sans&quot;, sans-serif;font-size:21px;line-height:1;white-space:pre;color:#000;font-style:italic;letter-spacing:0.700px;">30.6%</span>
<span style="position:absolute;left:2304.08px;top:576.53px;font-family:&quot;DejaVu Sans Condensed&quot;, &quot;DejaVu Sans&quot;, &quot;Liberation Sans&quot;, sans-serif;font-size:21px;line-height:1;white-space:pre;color:#000;font-style:italic;letter-spacing:0.700px;">33.9%</span>
<span style="position:absolute;left:2466.08px;top:576.53px;font-family:&quot;DejaVu Sans Condensed&quot;, &quot;DejaVu Sans&quot;, &quot;Liberation Sans&quot;, sans-serif;font-size:21px;line-height:1;white-space:pre;color:#000;font-style:italic;letter-spacing:0.700px;">36.2%</span>
<span style="position:absolute;left:2628.08px;top:576.53px;font-family:&quot;DejaVu Sans Condensed&quot;, &quot;DejaVu Sans&quot;, &quot;Liberation Sans&quot;, sans-serif;font-size:21px;line-height:1;white-space:pre;color:#000;font-style:italic;letter-spacing:0.700px;">38.1%</span>
<span style="position:absolute;left:86.20px;top:605.53px;font-family:&quot;DejaVu Sans Condensed&quot;, &quot;DejaVu Sans&quot;, &quot;Liberation Sans&quot;, sans-serif;font-size:21px;line-height:1;white-space:pre;color:#000;letter-spacing:0.355px;">Data Readiness</span>
<span style="position:absolute;left:762.28px;top:605.53px;font-family:&quot;DejaVu Sans Condensed&quot;, &quot;DejaVu Sans&quot;, &quot;Liberation Sans&quot;, sans-serif;font-size:21px;line-height:1;white-space:pre;color:#000;letter-spacing:0.129px;">158</span>
<span style="position:absolute;left:968.38px;top:605.53px;font-family:&quot;DejaVu Sans Condensed&quot;, &quot;DejaVu Sans&quot;, &quot;Liberation Sans&quot;, sans-serif;font-size:21px;line-height:1;white-space:pre;color:#000;letter-spacing:0.129px;">536</span>
<span style="position:absolute;left:1156.46px;top:605.53px;font-family:&quot;DejaVu Sans Condensed&quot;, &quot;DejaVu Sans&quot;, &quot;Liberation Sans&quot;, sans-serif;font-size:21px;line-height:1;white-space:pre;color:#000;letter-spacing:0.064px;">1,183</span>
<span style="position:absolute;left:1362.56px;top:605.53px;font-family:&quot;DejaVu Sans Condensed&quot;, &quot;DejaVu Sans&quot;, &quot;Liberation Sans&quot;, sans-serif;font-size:21px;line-height:1;white-space:pre;color:#000;letter-spacing:0.064px;">2,184</span>
<span style="position:absolute;left:1568.66px;top:605.53px;font-family:&quot;DejaVu Sans Condensed&quot;, &quot;DejaVu Sans&quot;, &quot;Liberation Sans&quot;, sans-serif;font-size:21px;line-height:1;white-space:pre;color:#000;letter-spacing:0.064px;">4,095</span>
<span style="position:absolute;left:1980.08px;top:605.53px;font-family:&quot;DejaVu Sans Condensed&quot;, &quot;DejaVu Sans&quot;, &quot;Liberation Sans&quot;, sans-serif;font-size:21px;line-height:1;white-space:pre;color:#000;font-style:italic;letter-spacing:0.700px;">24.9%</span>
<span style="position:absolute;left:2142.08px;top:605.53px;font-family:&quot;DejaVu Sans Condensed&quot;, &quot;DejaVu Sans&quot;, &quot;Liberation Sans&quot;, sans-serif;font-size:21px;line-height:1;white-space:pre;color:#000;font-style:italic;letter-spacing:0.700px;">27.8%</span>
<span style="position:absolute;left:2304.08px;top:605.53px;font-family:&quot;DejaVu Sans Condensed&quot;, &quot;DejaVu Sans&quot;, &quot;Liberation Sans&quot;, sans-serif;font-size:21px;line-height:1;white-space:pre;color:#000;font-style:italic;letter-spacing:0.700px;">30.0%</span>
<span style="position:absolute;left:2466.08px;top:605.53px;font-family:&quot;DejaVu Sans Condensed&quot;, &quot;DejaVu Sans&quot;, &quot;Liberation Sans&quot;, sans-serif;font-size:21px;line-height:1;white-space:pre;color:#000;font-style:italic;letter-spacing:0.700px;">31.1%</span>
<span style="position:absolute;left:2628.08px;top:605.53px;font-family:&quot;DejaVu Sans Condensed&quot;, &quot;DejaVu Sans&quot;, &quot;Liberation Sans&quot;, sans-serif;font-size:21px;line-height:1;white-space:pre;color:#000;font-style:italic;letter-spacing:0.700px;">32.8%</span>
<span style="position:absolute;left:86.20px;top:634.53px;font-family:&quot;DejaVu Sans Condensed&quot;, &quot;DejaVu Sans&quot;, &quot;Liberation Sans&quot;, sans-serif;font-size:21px;line-height:1;white-space:pre;color:#000;letter-spacing:0.324px;">AI Strategy</span>
<span style="position:absolute;left:762.28px;top:634.53px;font-family:&quot;DejaVu Sans Condensed&quot;, &quot;DejaVu Sans&quot;, &quot;Liberation Sans&quot;, sans-serif;font-size:21px;line-height:1;white-space:pre;color:#000;letter-spacing:0.129px;">300</span>
<span style="position:absolute;left:968.38px;top:634.53px;font-family:&quot;DejaVu Sans Condensed&quot;, &quot;DejaVu Sans&quot;, &quot;Liberation Sans&quot;, sans-serif;font-size:21px;line-height:1;white-space:pre;color:#000;letter-spacing:0.129px;">761</span>
<span style="position:absolute;left:1156.46px;top:634.53px;font-family:&quot;DejaVu Sans Condensed&quot;, &quot;DejaVu Sans&quot;, &quot;Liberation Sans&quot;, sans-serif;font-size:21px;line-height:1;white-space:pre;color:#000;letter-spacing:0.064px;">1,331</span>
<span style="position:absolute;left:1362.56px;top:634.53px;font-family:&quot;DejaVu Sans Condensed&quot;, &quot;DejaVu Sans&quot;, &quot;Liberation Sans&quot;, sans-serif;font-size:21px;line-height:1;white-space:pre;color:#000;letter-spacing:0.064px;">2,097</span>
<span style="position:absolute;left:1568.66px;top:634.53px;font-family:&quot;DejaVu Sans Condensed&quot;, &quot;DejaVu Sans&quot;, &quot;Liberation Sans&quot;, sans-serif;font-size:21px;line-height:1;white-space:pre;color:#000;letter-spacing:0.064px;">3,248</span>
<span style="position:absolute;left:1980.08px;top:634.53px;font-family:&quot;DejaVu Sans Condensed&quot;, &quot;DejaVu Sans&quot;, &quot;Liberation Sans&quot;, sans-serif;font-size:21px;line-height:1;white-space:pre;color:#000;font-style:italic;letter-spacing:0.700px;">47.1%</span>
<span style="position:absolute;left:2142.08px;top:634.53px;font-family:&quot;DejaVu Sans Condensed&quot;, &quot;DejaVu Sans&quot;, &quot;Liberation Sans&quot;, sans-serif;font-size:21px;line-height:1;white-space:pre;color:#000;font-style:italic;letter-spacing:0.700px;">39.6%</span>
<span style="position:absolute;left:2304.08px;top:634.53px;font-family:&quot;DejaVu Sans Condensed&quot;, &quot;DejaVu Sans&quot;, &quot;Liberation Sans&quot;, sans-serif;font-size:21px;line-height:1;white-space:pre;color:#000;font-style:italic;letter-spacing:0.700px;">33.8%</span>
<span style="position:absolute;left:2466.08px;top:634.53px;font-family:&quot;DejaVu Sans Condensed&quot;, &quot;DejaVu Sans&quot;, &quot;Liberation Sans&quot;, sans-serif;font-size:21px;line-height:1;white-space:pre;color:#000;font-style:italic;letter-spacing:0.700px;">29.9%</span>
<span style="position:absolute;left:2628.08px;top:634.53px;font-family:&quot;DejaVu Sans Condensed&quot;, &quot;DejaVu Sans&quot;, &quot;Liberation Sans&quot;, sans-serif;font-size:21px;line-height:1;white-space:pre;color:#000;font-style:italic;letter-spacing:0.700px;">26.0%</span>
<span style="position:absolute;left:86.20px;top:663.53px;font-family:&quot;DejaVu Sans Condensed&quot;, &quot;DejaVu Sans&quot;, &quot;Liberation Sans&quot;, sans-serif;font-size:21px;line-height:1;white-space:pre;color:#000;letter-spacing:0.212px;">Ongoing Support</span>
<span style="position:absolute;left:774.13px;top:663.53px;font-family:&quot;DejaVu Sans Condensed&quot;, &quot;DejaVu Sans&quot;, &quot;Liberation Sans&quot;, sans-serif;font-size:21px;line-height:1;white-space:pre;color:#000;letter-spacing:0.427px;">11</span>
<span style="position:absolute;left:980.23px;top:663.53px;font-family:&quot;DejaVu Sans Condensed&quot;, &quot;DejaVu Sans&quot;, &quot;Liberation Sans&quot;, sans-serif;font-size:21px;line-height:1;white-space:pre;color:#000;letter-spacing:0.427px;">38</span>
<span style="position:absolute;left:1186.33px;top:663.53px;font-family:&quot;DejaVu Sans Condensed&quot;, &quot;DejaVu Sans&quot;, &quot;Liberation Sans&quot;, sans-serif;font-size:21px;line-height:1;white-space:pre;color:#000;letter-spacing:0.427px;">92</span>
<span style="position:absolute;left:1380.58px;top:663.53px;font-family:&quot;DejaVu Sans Condensed&quot;, &quot;DejaVu Sans&quot;, &quot;Liberation Sans&quot;, sans-serif;font-size:21px;line-height:1;white-space:pre;color:#000;letter-spacing:0.129px;">197</span>
<span style="position:absolute;left:1586.68px;top:663.53px;font-family:&quot;DejaVu Sans Condensed&quot;, &quot;DejaVu Sans&quot;, &quot;Liberation Sans&quot;, sans-serif;font-size:21px;line-height:1;white-space:pre;color:#000;letter-spacing:0.129px;">385</span>
<span style="position:absolute;left:1992.80px;top:663.53px;font-family:&quot;DejaVu Sans Condensed&quot;, &quot;DejaVu Sans&quot;, &quot;Liberation Sans&quot;, sans-serif;font-size:21px;line-height:1;white-space:pre;color:#000;font-style:italic;letter-spacing:0.700px;">1.7%</span>
<span style="position:absolute;left:2154.80px;top:663.53px;font-family:&quot;DejaVu Sans Condensed&quot;, &quot;DejaVu Sans&quot;, &quot;Liberation Sans&quot;, sans-serif;font-size:21px;line-height:1;white-space:pre;color:#000;font-style:italic;letter-spacing:0.700px;">2.0%</span>
<span style="position:absolute;left:2316.80px;top:663.53px;font-family:&quot;DejaVu Sans Condensed&quot;, &quot;DejaVu Sans&quot;, &quot;Liberation Sans&quot;, sans-serif;font-size:21px;line-height:1;white-space:pre;color:#000;font-style:italic;letter-spacing:0.700px;">2.3%</span>
<span style="position:absolute;left:2478.80px;top:663.53px;font-family:&quot;DejaVu Sans Condensed&quot;, &quot;DejaVu Sans&quot;, &quot;Liberation Sans&quot;, sans-serif;font-size:21px;line-height:1;white-space:pre;color:#000;font-style:italic;letter-spacing:0.700px;">2.8%</span>
<span style="position:absolute;left:2640.80px;top:663.53px;font-family:&quot;DejaVu Sans Condensed&quot;, &quot;DejaVu Sans&quot;, &quot;Liberation Sans&quot;, sans-serif;font-size:21px;line-height:1;white-space:pre;color:#000;font-style:italic;letter-spacing:0.700px;">3.1%</span>
<span style="position:absolute;left:86.20px;top:692.63px;font-family:&quot;DejaVu Sans Condensed&quot;, &quot;DejaVu Sans&quot;, &quot;Liberation Sans&quot;, sans-serif;font-size:21px;line-height:1;white-space:pre;color:#000;letter-spacing:0.397px;">Other Revenue</span>
<span style="position:absolute;left:766.99px;top:692.63px;font-family:&quot;DejaVu Sans Condensed&quot;, &quot;DejaVu Sans&quot;, &quot;Liberation Sans&quot;, sans-serif;font-size:21px;line-height:1;white-space:pre;color:#000;">-</span>
<span style="position:absolute;left:973.09px;top:692.63px;font-family:&quot;DejaVu Sans Condensed&quot;, &quot;DejaVu Sans&quot;, &quot;Liberation Sans&quot;, sans-serif;font-size:21px;line-height:1;white-space:pre;color:#000;">-</span>
<span style="position:absolute;left:1179.19px;top:692.63px;font-family:&quot;DejaVu Sans Condensed&quot;, &quot;DejaVu Sans&quot;, &quot;Liberation Sans&quot;, sans-serif;font-size:21px;line-height:1;white-space:pre;color:#000;">-</span>
<span style="position:absolute;left:1385.29px;top:692.63px;font-family:&quot;DejaVu Sans Condensed&quot;, &quot;DejaVu Sans&quot;, &quot;Liberation Sans&quot;, sans-serif;font-size:21px;line-height:1;white-space:pre;color:#000;">-</span>
<span style="position:absolute;left:1591.39px;top:692.63px;font-family:&quot;DejaVu Sans Condensed&quot;, &quot;DejaVu Sans&quot;, &quot;Liberation Sans&quot;, sans-serif;font-size:21px;line-height:1;white-space:pre;color:#000;">-</span>
<span style="position:absolute;left:2035.59px;top:692.63px;font-family:&quot;DejaVu Sans Condensed&quot;, &quot;DejaVu Sans&quot;, &quot;Liberation Sans&quot;, sans-serif;font-size:21px;line-height:1;white-space:pre;color:#000;font-style:italic;">-</span>
<span style="position:absolute;left:2197.59px;top:692.63px;font-family:&quot;DejaVu Sans Condensed&quot;, &quot;DejaVu Sans&quot;, &quot;Liberation Sans&quot;, sans-serif;font-size:21px;line-height:1;white-space:pre;color:#000;font-style:italic;">-</span>
<span style="position:absolute;left:2359.59px;top:692.63px;font-family:&quot;DejaVu Sans Condensed&quot;, &quot;DejaVu Sans&quot;, &quot;Liberation Sans&quot;, sans-serif;font-size:21px;line-height:1;white-space:pre;color:#000;font-style:italic;">-</span>
<span style="position:absolute;left:2521.59px;top:692.63px;font-family:&quot;DejaVu Sans Condensed&quot;, &quot;DejaVu Sans&quot;, &quot;Liberation Sans&quot;, sans-serif;font-size:21px;line-height:1;white-space:pre;color:#000;font-style:italic;">-</span>
<span style="position:absolute;left:2683.59px;top:692.63px;font-family:&quot;DejaVu Sans Condensed&quot;, &quot;DejaVu Sans&quot;, &quot;Liberation Sans&quot;, sans-serif;font-size:21px;line-height:1;white-space:pre;color:#000;font-style:italic;">-</span>
<div style="position:absolute;left:82.00px;top:716.00px;width:1552.70px;height:30.00px;background:#49b2e8;"></div>
<div style="position:absolute;left:1893.70px;top:716.00px;width:811.80px;height:30.00px;background:#49b2e8;"></div>
<span style="position:absolute;left:98.60px;top:719.45px;font-family:&quot;DejaVu Sans&quot;, &quot;Liberation Sans&quot;, sans-serif;font-size:25px;line-height:1;white-space:pre;color:#fff;font-weight:700;letter-spacing:-0.367px;transform:scaleX(0.92);transform-origin:0 0;">Total Revenue</span>
<span style="position:absolute;left:753.95px;top:721.73px;font-family:&quot;DejaVu Sans&quot;, &quot;Liberation Sans&quot;, sans-serif;font-size:21px;line-height:1;white-space:pre;color:#fff;font-weight:700;letter-spacing:0.603px;transform:scaleX(0.92);transform-origin:0 0;">637</span>
<span style="position:absolute;left:939.52px;top:721.73px;font-family:&quot;DejaVu Sans&quot;, &quot;Liberation Sans&quot;, sans-serif;font-size:21px;line-height:1;white-space:pre;color:#fff;font-weight:700;letter-spacing:0.234px;transform:scaleX(0.92);transform-origin:0 0;">1,924</span>
<span style="position:absolute;left:1145.62px;top:721.73px;font-family:&quot;DejaVu Sans&quot;, &quot;Liberation Sans&quot;, sans-serif;font-size:21px;line-height:1;white-space:pre;color:#fff;font-weight:700;letter-spacing:0.234px;transform:scaleX(0.92);transform-origin:0 0;">3,945</span>
<span style="position:absolute;left:1351.72px;top:721.73px;font-family:&quot;DejaVu Sans&quot;, &quot;Liberation Sans&quot;, sans-serif;font-size:21px;line-height:1;white-space:pre;color:#fff;font-weight:700;letter-spacing:0.234px;transform:scaleX(0.92);transform-origin:0 0;">7,012</span>
<span style="position:absolute;left:1544.37px;top:721.73px;font-family:&quot;DejaVu Sans&quot;, &quot;Liberation Sans&quot;, sans-serif;font-size:21px;line-height:1;white-space:pre;color:#fff;font-weight:700;letter-spacing:0.188px;transform:scaleX(0.92);transform-origin:0 0;">12,488</span>
<span style="position:absolute;left:1987.27px;top:721.73px;font-family:&quot;DejaVu Sans&quot;, &quot;Liberation Sans&quot;, sans-serif;font-size:21px;line-height:1;white-space:pre;color:#fff;font-weight:700;font-style:italic;letter-spacing:0.700px;transform:scaleX(0.92);transform-origin:0 0;">100%</span>
<span style="position:absolute;left:2149.27px;top:721.73px;font-family:&quot;DejaVu Sans&quot;, &quot;Liberation Sans&quot;, sans-serif;font-size:21px;line-height:1;white-space:pre;color:#fff;font-weight:700;font-style:italic;letter-spacing:0.700px;transform:scaleX(0.92);transform-origin:0 0;">100%</span>
<span style="position:absolute;left:2311.27px;top:721.73px;font-family:&quot;DejaVu Sans&quot;, &quot;Liberation Sans&quot;, sans-serif;font-size:21px;line-height:1;white-space:pre;color:#fff;font-weight:700;font-style:italic;letter-spacing:0.700px;transform:scaleX(0.92);transform-origin:0 0;">100%</span>
<span style="position:absolute;left:2473.27px;top:721.73px;font-family:&quot;DejaVu Sans&quot;, &quot;Liberation Sans&quot;, sans-serif;font-size:21px;line-height:1;white-space:pre;color:#fff;font-weight:700;font-style:italic;letter-spacing:0.700px;transform:scaleX(0.92);transform-origin:0 0;">100%</span>
<span style="position:absolute;left:2635.27px;top:721.73px;font-family:&quot;DejaVu Sans&quot;, &quot;Liberation Sans&quot;, sans-serif;font-size:21px;line-height:1;white-space:pre;color:#fff;font-weight:700;font-style:italic;letter-spacing:0.700px;transform:scaleX(0.92);transform-origin:0 0;">100%</span>
<div style="position:absolute;left:2541.50px;top:1577.00px;width:306.00px;height:29.60px;background:#fff066;border:1.5px solid #d0d0d0;box-sizing:border-box;"></div>
<span style="position:absolute;left:2667.49px;top:1582.21px;font-family:&quot;DejaVu Sans&quot;, &quot;Liberation Sans&quot;, sans-serif;font-size:21.5px;line-height:1;white-space:pre;color:#1a1a1a;font-weight:700;letter-spacing:-0.015px;transform:scaleX(0.92);transform-origin:0 0;">2026</span>
<div style="position:absolute;left:82.70px;top:1617.60px;width:1494.50px;height:1.20px;background:#7fbcd8;"></div>
<div style="position:absolute;left:176.40px;top:1489.00px;width:1457.20px;height:1.00px;background:#6083ba;"></div>
<span style="position:absolute;left:121.75px;top:1479.53px;font-family:&quot;DejaVu Sans&quot;, &quot;Liberation Sans&quot;, sans-serif;font-size:21px;line-height:1;white-space:pre;color:#000;font-weight:700;letter-spacing:0.700px;transform:scaleX(0.92);transform-origin:0 0;">0%</span>
<div style="position:absolute;left:176.40px;top:1425.00px;width:1457.20px;height:1.00px;background:#6083ba;"></div>
<span style="position:absolute;left:107.67px;top:1415.73px;font-family:&quot;DejaVu Sans&quot;, &quot;Liberation Sans&quot;, sans-serif;font-size:21px;line-height:1;white-space:pre;color:#000;font-weight:700;letter-spacing:0.700px;transform:scaleX(0.92);transform-origin:0 0;">10%</span>
<div style="position:absolute;left:176.40px;top:1361.00px;width:1457.20px;height:1.00px;background:#6083ba;"></div>
<span style="position:absolute;left:107.67px;top:1351.93px;font-family:&quot;DejaVu Sans&quot;, &quot;Liberation Sans&quot;, sans-serif;font-size:21px;line-height:1;white-space:pre;color:#000;font-weight:700;letter-spacing:0.700px;transform:scaleX(0.92);transform-origin:0 0;">20%</span>
<div style="position:absolute;left:176.40px;top:1297.00px;width:1457.20px;height:1.00px;background:#6083ba;"></div>
<span style="position:absolute;left:107.67px;top:1288.13px;font-family:&quot;DejaVu Sans&quot;, &quot;Liberation Sans&quot;, sans-serif;font-size:21px;line-height:1;white-space:pre;color:#000;font-weight:700;letter-spacing:0.700px;transform:scaleX(0.92);transform-origin:0 0;">30%</span>
<div style="position:absolute;left:176.40px;top:1234.00px;width:1457.20px;height:1.00px;background:#6083ba;"></div>
<span style="position:absolute;left:107.67px;top:1224.33px;font-family:&quot;DejaVu Sans&quot;, &quot;Liberation Sans&quot;, sans-serif;font-size:21px;line-height:1;white-space:pre;color:#000;font-weight:700;letter-spacing:0.700px;transform:scaleX(0.92);transform-origin:0 0;">40%</span>
<div style="position:absolute;left:176.40px;top:1170.00px;width:1457.20px;height:1.00px;background:#6083ba;"></div>
<span style="position:absolute;left:107.67px;top:1160.53px;font-family:&quot;DejaVu Sans&quot;, &quot;Liberation Sans&quot;, sans-serif;font-size:21px;line-height:1;white-space:pre;color:#000;font-weight:700;letter-spacing:0.700px;transform:scaleX(0.92);transform-origin:0 0;">50%</span>
<div style="position:absolute;left:176.40px;top:1106.00px;width:1457.20px;height:1.00px;background:#6083ba;"></div>
<span style="position:absolute;left:107.67px;top:1096.73px;font-family:&quot;DejaVu Sans&quot;, &quot;Liberation Sans&quot;, sans-serif;font-size:21px;line-height:1;white-space:pre;color:#000;font-weight:700;letter-spacing:0.700px;transform:scaleX(0.92);transform-origin:0 0;">60%</span>
<div style="position:absolute;left:176.40px;top:1042.00px;width:1457.20px;height:1.00px;background:#6083ba;"></div>
<span style="position:absolute;left:107.67px;top:1032.93px;font-family:&quot;DejaVu Sans&quot;, &quot;Liberation Sans&quot;, sans-serif;font-size:21px;line-height:1;white-space:pre;color:#000;font-weight:700;letter-spacing:0.700px;transform:scaleX(0.92);transform-origin:0 0;">70%</span>
<div style="position:absolute;left:176.40px;top:978.00px;width:1457.20px;height:1.00px;background:#6083ba;"></div>
<span style="position:absolute;left:107.67px;top:969.13px;font-family:&quot;DejaVu Sans&quot;, &quot;Liberation Sans&quot;, sans-serif;font-size:21px;line-height:1;white-space:pre;color:#000;font-weight:700;letter-spacing:0.700px;transform:scaleX(0.92);transform-origin:0 0;">80%</span>
<div style="position:absolute;left:176.40px;top:915.00px;width:1457.20px;height:1.00px;background:#6083ba;"></div>
<span style="position:absolute;left:107.67px;top:905.33px;font-family:&quot;DejaVu Sans&quot;, &quot;Liberation Sans&quot;, sans-serif;font-size:21px;line-height:1;white-space:pre;color:#000;font-weight:700;letter-spacing:0.700px;transform:scaleX(0.92);transform-origin:0 0;">90%</span>
<div style="position:absolute;left:176.40px;top:851.00px;width:1457.20px;height:1.00px;background:#6083ba;"></div>
<span style="position:absolute;left:93.57px;top:841.53px;font-family:&quot;DejaVu Sans&quot;, &quot;Liberation Sans&quot;, sans-serif;font-size:21px;line-height:1;white-space:pre;color:#000;font-weight:700;letter-spacing:0.700px;transform:scaleX(0.92);transform-origin:0 0;">100%</span>
<div style="position:absolute;left:224.90px;top:1321.04px;width:194.30px;height:168.56px;background:#49b2e8;"></div>
<div style="position:absolute;left:224.90px;top:1162.79px;width:194.30px;height:158.55px;background:#4b50d0;"></div>
<div style="position:absolute;left:224.90px;top:863.62px;width:194.30px;height:299.47px;background:#f07c70;"></div>
<div style="position:absolute;left:224.90px;top:851.30px;width:194.30px;height:12.62px;background:#f4b400;"></div>
<div style="position:absolute;left:292.55px;top:1387.27px;width:59.00px;height:36.40px;background:#dce6f2;"></div>
<span style="position:absolute;left:300.93px;top:1396.80px;font-family:&quot;DejaVu Sans&quot;, &quot;Liberation Sans&quot;, sans-serif;font-size:21px;line-height:1;white-space:pre;color:#000;font-weight:700;letter-spacing:1.038px;transform:scaleX(0.92);transform-origin:0 0;">168</span>
<div style="position:absolute;left:288.55px;top:1224.01px;width:67.00px;height:36.40px;background:#aeaeee;"></div>
<span style="position:absolute;left:303.93px;top:1233.55px;font-family:&quot;DejaVu Sans&quot;, &quot;Liberation Sans&quot;, sans-serif;font-size:21px;line-height:1;white-space:pre;color:#000;font-weight:700;letter-spacing:1.038px;transform:scaleX(0.92);transform-origin:0 0;">158</span>
<div style="position:absolute;left:288.55px;top:994.65px;width:67.00px;height:36.40px;background:#f8c8ae;"></div>
<span style="position:absolute;left:303.93px;top:1004.19px;font-family:&quot;DejaVu Sans&quot;, &quot;Liberation Sans&quot;, sans-serif;font-size:21px;line-height:1;white-space:pre;color:#000;font-weight:700;letter-spacing:1.038px;transform:scaleX(0.92);transform-origin:0 0;">300</span>
<div style="position:absolute;left:296.55px;top:839.66px;width:51.00px;height:36.40px;background:#fdecd0;"></div>
<span style="position:absolute;left:311.00px;top:849.19px;font-family:&quot;DejaVu Sans&quot;, &quot;Liberation Sans&quot;, sans-serif;font-size:21px;line-height:1;white-space:pre;color:#000;font-weight:700;letter-spacing:1.307px;transform:scaleX(0.92);transform-origin:0 0;">11</span>
<div style="position:absolute;left:306.55px;top:834.00px;width:31.00px;height:36.40px;background:#dcebd8;"></div>
<span style="position:absolute;left:315.32px;top:842.73px;font-family:&quot;DejaVu Sans&quot;, &quot;Liberation Sans&quot;, sans-serif;font-size:21px;line-height:1;white-space:pre;color:#000;font-weight:700;letter-spacing:2.114px;transform:scaleX(0.92);transform-origin:0 0;">0</span>
<span style="position:absolute;left:294.90px;top:1509.03px;font-family:&quot;DejaVu Sans&quot;, &quot;Liberation Sans&quot;, sans-serif;font-size:21px;line-height:1;white-space:pre;color:#000;font-weight:700;letter-spacing:0.550px;transform:scaleX(0.92);transform-origin:0 0;">2026</span>
<div style="position:absolute;left:516.25px;top:1293.99px;width:194.30px;height:195.61px;background:#49b2e8;"></div>
<div style="position:absolute;left:516.25px;top:1116.25px;width:194.30px;height:178.04px;background:#4b50d0;"></div>
<div style="position:absolute;left:516.25px;top:865.20px;width:194.30px;height:251.35px;background:#f07c70;"></div>
<div style="position:absolute;left:516.25px;top:851.30px;width:194.30px;height:14.20px;background:#f4b400;"></div>
<div style="position:absolute;left:583.90px;top:1373.74px;width:59.00px;height:36.40px;background:#dce6f2;"></div>
<span style="position:absolute;left:592.28px;top:1383.28px;font-family:&quot;DejaVu Sans&quot;, &quot;Liberation Sans&quot;, sans-serif;font-size:21px;line-height:1;white-space:pre;color:#000;font-weight:700;letter-spacing:1.038px;transform:scaleX(0.92);transform-origin:0 0;">589</span>
<div style="position:absolute;left:579.90px;top:1187.22px;width:67.00px;height:36.40px;background:#aeaeee;"></div>
<span style="position:absolute;left:595.28px;top:1196.75px;font-family:&quot;DejaVu Sans&quot;, &quot;Liberation Sans&quot;, sans-serif;font-size:21px;line-height:1;white-space:pre;color:#000;font-weight:700;letter-spacing:1.038px;transform:scaleX(0.92);transform-origin:0 0;">536</span>
<div style="position:absolute;left:579.90px;top:972.17px;width:67.00px;height:36.40px;background:#f8c8ae;"></div>
<span style="position:absolute;left:595.28px;top:981.71px;font-family:&quot;DejaVu Sans&quot;, &quot;Liberation Sans&quot;, sans-serif;font-size:21px;line-height:1;white-space:pre;color:#000;font-weight:700;letter-spacing:1.038px;transform:scaleX(0.92);transform-origin:0 0;">761</span>
<div style="position:absolute;left:587.90px;top:840.45px;width:51.00px;height:36.40px;background:#fdecd0;"></div>
<span style="position:absolute;left:602.35px;top:849.98px;font-family:&quot;DejaVu Sans&quot;, &quot;Liberation Sans&quot;, sans-serif;font-size:21px;line-height:1;white-space:pre;color:#000;font-weight:700;letter-spacing:1.307px;transform:scaleX(0.92);transform-origin:0 0;">38</span>
<div style="position:absolute;left:597.90px;top:834.00px;width:31.00px;height:36.40px;background:#dcebd8;"></div>
<span style="position:absolute;left:606.67px;top:842.73px;font-family:&quot;DejaVu Sans&quot;, &quot;Liberation Sans&quot;, sans-serif;font-size:21px;line-height:1;white-space:pre;color:#000;font-weight:700;letter-spacing:2.114px;transform:scaleX(0.92);transform-origin:0 0;">0</span>
<span style="position:absolute;left:586.25px;top:1509.03px;font-family:&quot;DejaVu Sans&quot;, &quot;Liberation Sans&quot;, sans-serif;font-size:21px;line-height:1;white-space:pre;color:#000;font-weight:700;letter-spacing:0.550px;transform:scaleX(0.92);transform-origin:0 0;">2027</span>
<div style="position:absolute;left:807.60px;top:1272.86px;width:194.30px;height:216.74px;background:#49b2e8;"></div>
<div style="position:absolute;left:807.60px;top:1081.49px;width:194.30px;height:191.67px;background:#4b50d0;"></div>
<div style="position:absolute;left:807.60px;top:867.48px;width:194.30px;height:214.31px;background:#f07c70;"></div>
<div style="position:absolute;left:807.60px;top:851.30px;width:194.30px;height:16.48px;background:#f4b400;"></div>
<div style="position:absolute;left:864.75px;top:1363.18px;width:80.00px;height:36.40px;background:#dce6f2;"></div>
<span style="position:absolute;left:873.16px;top:1372.71px;font-family:&quot;DejaVu Sans&quot;, &quot;Liberation Sans&quot;, sans-serif;font-size:21px;line-height:1;white-space:pre;color:#000;font-weight:700;letter-spacing:0.560px;transform:scaleX(0.92);transform-origin:0 0;">1,338</span>
<div style="position:absolute;left:860.65px;top:1159.27px;width:88.20px;height:36.40px;background:#aeaeee;"></div>
<span style="position:absolute;left:876.16px;top:1168.81px;font-family:&quot;DejaVu Sans&quot;, &quot;Liberation Sans&quot;, sans-serif;font-size:21px;line-height:1;white-space:pre;color:#000;font-weight:700;letter-spacing:0.560px;transform:scaleX(0.92);transform-origin:0 0;">1,183</span>
<div style="position:absolute;left:860.65px;top:955.94px;width:88.20px;height:36.40px;background:#f8c8ae;"></div>
<span style="position:absolute;left:876.16px;top:965.47px;font-family:&quot;DejaVu Sans&quot;, &quot;Liberation Sans&quot;, sans-serif;font-size:21px;line-height:1;white-space:pre;color:#000;font-weight:700;letter-spacing:0.560px;transform:scaleX(0.92);transform-origin:0 0;">1,331</span>
<div style="position:absolute;left:879.25px;top:841.59px;width:51.00px;height:36.40px;background:#fdecd0;"></div>
<span style="position:absolute;left:893.70px;top:851.13px;font-family:&quot;DejaVu Sans&quot;, &quot;Liberation Sans&quot;, sans-serif;font-size:21px;line-height:1;white-space:pre;color:#000;font-weight:700;letter-spacing:1.307px;transform:scaleX(0.92);transform-origin:0 0;">92</span>
<div style="position:absolute;left:889.25px;top:834.00px;width:31.00px;height:36.40px;background:#dcebd8;"></div>
<span style="position:absolute;left:898.02px;top:842.73px;font-family:&quot;DejaVu Sans&quot;, &quot;Liberation Sans&quot;, sans-serif;font-size:21px;line-height:1;white-space:pre;color:#000;font-weight:700;letter-spacing:2.114px;transform:scaleX(0.92);transform-origin:0 0;">0</span>
<span style="position:absolute;left:877.60px;top:1509.03px;font-family:&quot;DejaVu Sans&quot;, &quot;Liberation Sans&quot;, sans-serif;font-size:21px;line-height:1;white-space:pre;color:#000;font-weight:700;letter-spacing:0.550px;transform:scaleX(0.92);transform-origin:0 0;">2028</span>
<div style="position:absolute;left:1098.95px;top:1258.68px;width:194.30px;height:230.92px;background:#49b2e8;"></div>
<div style="position:absolute;left:1098.95px;top:1059.99px;width:194.30px;height:198.99px;background:#4b50d0;"></div>
<div style="position:absolute;left:1098.95px;top:870.52px;width:194.30px;height:189.77px;background:#f07c70;"></div>
<div style="position:absolute;left:1098.95px;top:851.30px;width:194.30px;height:19.52px;background:#f4b400;"></div>
<div style="position:absolute;left:1156.10px;top:1356.09px;width:80.00px;height:36.40px;background:#dce6f2;"></div>
<span style="position:absolute;left:1164.51px;top:1365.62px;font-family:&quot;DejaVu Sans&quot;, &quot;Liberation Sans&quot;, sans-serif;font-size:21px;line-height:1;white-space:pre;color:#000;font-weight:700;letter-spacing:0.560px;transform:scaleX(0.92);transform-origin:0 0;">2,535</span>
<div style="position:absolute;left:1152.00px;top:1141.44px;width:88.20px;height:36.40px;background:#aeaeee;"></div>
<span style="position:absolute;left:1167.51px;top:1150.97px;font-family:&quot;DejaVu Sans&quot;, &quot;Liberation Sans&quot;, sans-serif;font-size:21px;line-height:1;white-space:pre;color:#000;font-weight:700;letter-spacing:0.560px;transform:scaleX(0.92);transform-origin:0 0;">2,184</span>
<div style="position:absolute;left:1152.00px;top:946.71px;width:88.20px;height:36.40px;background:#f8c8ae;"></div>
<span style="position:absolute;left:1167.51px;top:956.24px;font-family:&quot;DejaVu Sans&quot;, &quot;Liberation Sans&quot;, sans-serif;font-size:21px;line-height:1;white-space:pre;color:#000;font-weight:700;letter-spacing:0.560px;transform:scaleX(0.92);transform-origin:0 0;">2,097</span>
<div style="position:absolute;left:1163.10px;top:843.11px;width:66.00px;height:36.40px;background:#fdecd0;"></div>
<span style="position:absolute;left:1177.98px;top:852.64px;font-family:&quot;DejaVu Sans&quot;, &quot;Liberation Sans&quot;, sans-serif;font-size:21px;line-height:1;white-space:pre;color:#000;font-weight:700;letter-spacing:1.038px;transform:scaleX(0.92);transform-origin:0 0;">197</span>
<div style="position:absolute;left:1180.60px;top:834.00px;width:31.00px;height:36.40px;background:#dcebd8;"></div>
<span style="position:absolute;left:1189.37px;top:842.73px;font-family:&quot;DejaVu Sans&quot;, &quot;Liberation Sans&quot;, sans-serif;font-size:21px;line-height:1;white-space:pre;color:#000;font-weight:700;letter-spacing:2.114px;transform:scaleX(0.92);transform-origin:0 0;">0</span>
<span style="position:absolute;left:1168.95px;top:1509.03px;font-family:&quot;DejaVu Sans&quot;, &quot;Liberation Sans&quot;, sans-serif;font-size:21px;line-height:1;white-space:pre;color:#000;font-weight:700;letter-spacing:0.550px;transform:scaleX(0.92);transform-origin:0 0;">2029</span>
<div style="position:absolute;left:1390.30px;top:1246.12px;width:194.30px;height:243.48px;background:#49b2e8;"></div>
<div style="position:absolute;left:1390.30px;top:1036.91px;width:194.30px;height:209.51px;background:#4b50d0;"></div>
<div style="position:absolute;left:1390.30px;top:872.27px;width:194.30px;height:164.94px;background:#f07c70;"></div>
<div style="position:absolute;left:1390.30px;top:851.30px;width:194.30px;height:21.27px;background:#f4b400;"></div>
<div style="position:absolute;left:1447.45px;top:1349.81px;width:80.00px;height:36.40px;background:#dce6f2;"></div>
<span style="position:absolute;left:1455.86px;top:1359.34px;font-family:&quot;DejaVu Sans&quot;, &quot;Liberation Sans&quot;, sans-serif;font-size:21px;line-height:1;white-space:pre;color:#000;font-weight:700;letter-spacing:0.560px;transform:scaleX(0.92);transform-origin:0 0;">4,760</span>
<div style="position:absolute;left:1443.35px;top:1123.61px;width:88.20px;height:36.40px;background:#aeaeee;"></div>
<span style="position:absolute;left:1458.86px;top:1133.15px;font-family:&quot;DejaVu Sans&quot;, &quot;Liberation Sans&quot;, sans-serif;font-size:21px;line-height:1;white-space:pre;color:#000;font-weight:700;letter-spacing:0.560px;transform:scaleX(0.92);transform-origin:0 0;">4,095</span>
<div style="position:absolute;left:1443.35px;top:936.04px;width:88.20px;height:36.40px;background:#f8c8ae;"></div>
<span style="position:absolute;left:1458.86px;top:945.57px;font-family:&quot;DejaVu Sans&quot;, &quot;Liberation Sans&quot;, sans-serif;font-size:21px;line-height:1;white-space:pre;color:#000;font-weight:700;letter-spacing:0.560px;transform:scaleX(0.92);transform-origin:0 0;">3,248</span>
<div style="position:absolute;left:1454.45px;top:843.98px;width:66.00px;height:36.40px;background:#fdecd0;"></div>
<span style="position:absolute;left:1469.33px;top:853.52px;font-family:&quot;DejaVu Sans&quot;, &quot;Liberation Sans&quot;, sans-serif;font-size:21px;line-height:1;white-space:pre;color:#000;font-weight:700;letter-spacing:1.038px;transform:scaleX(0.92);transform-origin:0 0;">385</span>
<div style="position:absolute;left:1471.95px;top:834.00px;width:31.00px;height:36.40px;background:#dcebd8;"></div>
<span style="position:absolute;left:1480.72px;top:842.73px;font-family:&quot;DejaVu Sans&quot;, &quot;Liberation Sans&quot;, sans-serif;font-size:21px;line-height:1;white-space:pre;color:#000;font-weight:700;letter-spacing:2.114px;transform:scaleX(0.92);transform-origin:0 0;">0</span>
<span style="position:absolute;left:1460.30px;top:1509.03px;font-family:&quot;DejaVu Sans&quot;, &quot;Liberation Sans&quot;, sans-serif;font-size:21px;line-height:1;white-space:pre;color:#000;font-weight:700;letter-spacing:0.550px;transform:scaleX(0.92);transform-origin:0 0;">2030</span>
<div style="position:absolute;left:2069.50px;top:1487.00px;width:776.50px;height:1.00px;background:#6fb2d4;"></div>
<span style="position:absolute;left:2032.58px;top:1477.43px;font-family:&quot;DejaVu Sans&quot;, &quot;Liberation Sans&quot;, sans-serif;font-size:21px;line-height:1;white-space:pre;color:#000;font-weight:700;letter-spacing:2.694px;transform:scaleX(0.92);transform-origin:0 0;">-</span>
<div style="position:absolute;left:2069.50px;top:1423.00px;width:776.50px;height:1.00px;background:#6fb2d4;"></div>
<span style="position:absolute;left:1998.35px;top:1413.81px;font-family:&quot;DejaVu Sans&quot;, &quot;Liberation Sans&quot;, sans-serif;font-size:21px;line-height:1;white-space:pre;color:#000;font-weight:700;letter-spacing:1.038px;transform:scaleX(0.92);transform-origin:0 0;">500</span>
<div style="position:absolute;left:2069.50px;top:1360.00px;width:776.50px;height:1.00px;background:#6fb2d4;"></div>
<span style="position:absolute;left:1977.42px;top:1350.19px;font-family:&quot;DejaVu Sans&quot;, &quot;Liberation Sans&quot;, sans-serif;font-size:21px;line-height:1;white-space:pre;color:#000;font-weight:700;letter-spacing:0.560px;transform:scaleX(0.92);transform-origin:0 0;">1,000</span>
<div style="position:absolute;left:2069.50px;top:1296.00px;width:776.50px;height:1.00px;background:#6fb2d4;"></div>
<span style="position:absolute;left:1977.42px;top:1286.57px;font-family:&quot;DejaVu Sans&quot;, &quot;Liberation Sans&quot;, sans-serif;font-size:21px;line-height:1;white-space:pre;color:#000;font-weight:700;letter-spacing:0.560px;transform:scaleX(0.92);transform-origin:0 0;">1,500</span>
<div style="position:absolute;left:2069.50px;top:1233.00px;width:776.50px;height:1.00px;background:#6fb2d4;"></div>
<span style="position:absolute;left:1977.42px;top:1222.95px;font-family:&quot;DejaVu Sans&quot;, &quot;Liberation Sans&quot;, sans-serif;font-size:21px;line-height:1;white-space:pre;color:#000;font-weight:700;letter-spacing:0.560px;transform:scaleX(0.92);transform-origin:0 0;">2,000</span>
<div style="position:absolute;left:2069.50px;top:1169.00px;width:776.50px;height:1.00px;background:#6fb2d4;"></div>
<span style="position:absolute;left:1977.42px;top:1159.33px;font-family:&quot;DejaVu Sans&quot;, &quot;Liberation Sans&quot;, sans-serif;font-size:21px;line-height:1;white-space:pre;color:#000;font-weight:700;letter-spacing:0.560px;transform:scaleX(0.92);transform-origin:0 0;">2,500</span>
<div style="position:absolute;left:2069.50px;top:1105.00px;width:776.50px;height:1.00px;background:#6fb2d4;"></div>
<span style="position:absolute;left:1977.42px;top:1095.71px;font-family:&quot;DejaVu Sans&quot;, &quot;Liberation Sans&quot;, sans-serif;font-size:21px;line-height:1;white-space:pre;color:#000;font-weight:700;letter-spacing:0.560px;transform:scaleX(0.92);transform-origin:0 0;">3,000</span>
<div style="position:absolute;left:2069.50px;top:1042.00px;width:776.50px;height:1.00px;background:#6fb2d4;"></div>
<span style="position:absolute;left:1977.42px;top:1032.09px;font-family:&quot;DejaVu Sans&quot;, &quot;Liberation Sans&quot;, sans-serif;font-size:21px;line-height:1;white-space:pre;color:#000;font-weight:700;letter-spacing:0.560px;transform:scaleX(0.92);transform-origin:0 0;">3,500</span>
<div style="position:absolute;left:2069.50px;top:978.00px;width:776.50px;height:1.00px;background:#6fb2d4;"></div>
<span style="position:absolute;left:1977.42px;top:968.47px;font-family:&quot;DejaVu Sans&quot;, &quot;Liberation Sans&quot;, sans-serif;font-size:21px;line-height:1;white-space:pre;color:#000;font-weight:700;letter-spacing:0.560px;transform:scaleX(0.92);transform-origin:0 0;">4,000</span>
<div style="position:absolute;left:2069.50px;top:914.00px;width:776.50px;height:1.00px;background:#6fb2d4;"></div>
<span style="position:absolute;left:1977.42px;top:904.85px;font-family:&quot;DejaVu Sans&quot;, &quot;Liberation Sans&quot;, sans-serif;font-size:21px;line-height:1;white-space:pre;color:#000;font-weight:700;letter-spacing:0.560px;transform:scaleX(0.92);transform-origin:0 0;">4,500</span>
<div style="position:absolute;left:2069.50px;top:851.00px;width:776.50px;height:1.00px;background:#6fb2d4;"></div>
<span style="position:absolute;left:1977.42px;top:841.23px;font-family:&quot;DejaVu Sans&quot;, &quot;Liberation Sans&quot;, sans-serif;font-size:21px;line-height:1;white-space:pre;color:#000;font-weight:700;letter-spacing:0.560px;transform:scaleX(0.92);transform-origin:0 0;">5,000</span>
<svg style="left:0;top:0" width="2902" height="1762"><polyline points="2147.2,1466.1 2302.4,1412.6 2457.8,1317.3 2613.1,1164.9 2768.3,881.8" fill="none" stroke="#49b2e8" stroke-width="3.7" stroke-linejoin="round"/><circle cx="2147.2" cy="1466.1" r="6.8" fill="#49b2e8"/><circle cx="2302.4" cy="1412.6" r="6.8" fill="#49b2e8"/><circle cx="2457.8" cy="1317.3" r="6.8" fill="#49b2e8"/><circle cx="2613.1" cy="1164.9" r="6.8" fill="#49b2e8"/><circle cx="2768.3" cy="881.8" r="6.8" fill="#49b2e8"/><polyline points="2147.2,1467.4 2302.4,1419.3 2457.8,1337.0 2613.1,1209.6 2768.3,966.5" fill="none" stroke="#4b50d0" stroke-width="3.7" stroke-linejoin="round"/><rect x="2139.2" y="1459.4" width="16" height="16" fill="#4b50d0"/><rect x="2294.4" y="1411.3" width="16" height="16" fill="#4b50d0"/><rect x="2449.8" y="1329.0" width="16" height="16" fill="#4b50d0"/><rect x="2605.1" y="1201.6" width="16" height="16" fill="#4b50d0"/><rect x="2760.3" y="958.5" width="16" height="16" fill="#4b50d0"/><polyline points="2147.2,1449.3 2302.4,1390.7 2457.8,1318.1 2613.1,1220.7 2768.3,1074.2" fill="none" stroke="#f07c70" stroke-width="3.7" stroke-linejoin="round"/><polygon points="2147.2,1440.3 2155.7,1456.3 2138.7,1456.3" fill="#f07c70"/><polygon points="2302.4,1381.7 2310.9,1397.7 2293.9,1397.7" fill="#f07c70"/><polygon points="2457.8,1309.1 2466.2,1325.1 2449.2,1325.1" fill="#f07c70"/><polygon points="2613.1,1211.7 2621.6,1227.7 2604.6,1227.7" fill="#f07c70"/><polygon points="2768.3,1065.2 2776.8,1081.2 2759.8,1081.2" fill="#f07c70"/><polyline points="2147.2,1486.1 2302.4,1482.7 2457.8,1475.8 2613.1,1462.4 2768.3,1438.5" fill="none" stroke="#f4b400" stroke-width="3.7" stroke-linejoin="round"/><rect x="2139.2" y="1478.1" width="16" height="16" fill="#f4b400"/><rect x="2294.4" y="1474.7" width="16" height="16" fill="#f4b400"/><rect x="2449.8" y="1467.8" width="16" height="16" fill="#f4b400"/><rect x="2605.1" y="1454.4" width="16" height="16" fill="#f4b400"/><rect x="2760.3" y="1430.5" width="16" height="16" fill="#f4b400"/><polyline points="2147.2,1487.5 2302.4,1487.5 2457.8,1487.5 2613.1,1487.5 2768.3,1487.5" fill="none" stroke="#2db3a4" stroke-width="3.7" stroke-linejoin="round"/><rect x="2139.2" y="1479.5" width="16" height="16" fill="#2db3a4"/><rect x="2294.4" y="1479.5" width="16" height="16" fill="#2db3a4"/><rect x="2449.8" y="1479.5" width="16" height="16" fill="#2db3a4"/><rect x="2605.1" y="1479.5" width="16" height="16" fill="#2db3a4"/><rect x="2760.3" y="1479.5" width="16" height="16" fill="#2db3a4"/><line x1="1664" y1="902" x2="1720.5" y2="902" stroke="#49b2e8" stroke-width="3.6" stroke-linecap="round"/><circle cx="1692.0" cy="902.0" r="5.5" fill="#49b2e8"/><line x1="1664" y1="1034" x2="1720.5" y2="1034" stroke="#4b50d0" stroke-width="3.6" stroke-linecap="round"/><rect x="1686.5" y="1028.5" width="11.0" height="11.0" fill="#4b50d0"/><line x1="1664" y1="1166" x2="1720.5" y2="1166" stroke="#f07c70" stroke-width="3.6" stroke-linecap="round"/><polygon points="1692.0,1159.5 1698.0,1170.5 1686.0,1170.5" fill="#f07c70"/><line x1="1664" y1="1298" x2="1720.5" y2="1298" stroke="#f4b400" stroke-width="3.6" stroke-linecap="round"/><path d="M1687.0 1293.0L1697.0 1303.0M1697.0 1293.0L1687.0 1303.0" stroke="#e0a000" stroke-width="1.5" fill="none"/><line x1="1664" y1="1430" x2="1720.5" y2="1430" stroke="#2db3a4" stroke-width="3.6" stroke-linecap="round"/><rect x="1686.5" y="1424.5" width="11.0" height="11.0" fill="#5aa860"/><path d="M1687.0 1425.0L1697.0 1435.0M1697.0 1425.0L1687.0 1435.0" stroke="#2db3a4" stroke-width="1.5" fill="none"/></svg>
<span style="position:absolute;left:1725.30px;top:892.43px;font-family:&quot;DejaVu Sans&quot;, &quot;Liberation Sans&quot;, sans-serif;font-size:21px;line-height:1;white-space:pre;color:#000;font-weight:700;letter-spacing:0.571px;transform:scaleX(0.92);transform-origin:0 0;">Custom AI Model</span>
<span style="position:absolute;left:1725.30px;top:1024.43px;font-family:&quot;DejaVu Sans&quot;, &quot;Liberation Sans&quot;, sans-serif;font-size:21px;line-height:1;white-space:pre;color:#000;font-weight:700;letter-spacing:0.341px;transform:scaleX(0.92);transform-origin:0 0;">Data Readiness</span>
<span style="position:absolute;left:1725.30px;top:1156.43px;font-family:&quot;DejaVu Sans&quot;, &quot;Liberation Sans&quot;, sans-serif;font-size:21px;line-height:1;white-space:pre;color:#000;font-weight:700;letter-spacing:0.459px;transform:scaleX(0.92);transform-origin:0 0;">AI Strategy</span>
<span style="position:absolute;left:1725.30px;top:1288.43px;font-family:&quot;DejaVu Sans&quot;, &quot;Liberation Sans&quot;, sans-serif;font-size:21px;line-height:1;white-space:pre;color:#000;font-weight:700;letter-spacing:0.356px;transform:scaleX(0.92);transform-origin:0 0;">Ongoing Support</span>
<span style="position:absolute;left:1725.30px;top:1420.43px;font-family:&quot;DejaVu Sans&quot;, &quot;Liberation Sans&quot;, sans-serif;font-size:21px;line-height:1;white-space:pre;color:#000;font-weight:700;letter-spacing:0.362px;transform:scaleX(0.92);transform-origin:0 0;">Other Revenue</span>
<span style="position:absolute;left:2120.00px;top:1506.53px;font-family:&quot;DejaVu Sans&quot;, &quot;Liberation Sans&quot;, sans-serif;font-size:21px;line-height:1;white-space:pre;color:#000;font-weight:700;letter-spacing:0.550px;transform:scaleX(0.92);transform-origin:0 0;">2026</span>
<span style="position:absolute;left:2275.30px;top:1506.53px;font-family:&quot;DejaVu Sans&quot;, &quot;Liberation Sans&quot;, sans-serif;font-size:21px;line-height:1;white-space:pre;color:#000;font-weight:700;letter-spacing:0.550px;transform:scaleX(0.92);transform-origin:0 0;">2027</span>
<span style="position:absolute;left:2430.60px;top:1506.53px;font-family:&quot;DejaVu Sans&quot;, &quot;Liberation Sans&quot;, sans-serif;font-size:21px;line-height:1;white-space:pre;color:#000;font-weight:700;letter-spacing:0.550px;transform:scaleX(0.92);transform-origin:0 0;">2028</span>
<span style="position:absolute;left:2585.90px;top:1506.53px;font-family:&quot;DejaVu Sans&quot;, &quot;Liberation Sans&quot;, sans-serif;font-size:21px;line-height:1;white-space:pre;color:#000;font-weight:700;letter-spacing:0.550px;transform:scaleX(0.92);transform-origin:0 0;">2029</span>
<span style="position:absolute;left:2741.20px;top:1506.53px;font-family:&quot;DejaVu Sans&quot;, &quot;Liberation Sans&quot;, sans-serif;font-size:21px;line-height:1;white-space:pre;color:#000;font-weight:700;letter-spacing:0.550px;transform:scaleX(0.92);transform-origin:0 0;">2030</span>
<div style="position:absolute;left:1640.60px;top:1658.70px;width:11.00px;height:11.60px;background:#49b2e8;"></div>
<span style="position:absolute;left:1657.00px;top:1653.83px;font-family:&quot;DejaVu Sans&quot;, &quot;Liberation Sans&quot;, sans-serif;font-size:21px;line-height:1;white-space:pre;color:#000;font-weight:700;letter-spacing:0.600px;transform:scaleX(0.92);transform-origin:0 0;">Custom AI Model</span>
<div style="position:absolute;left:2266.00px;top:1649.70px;width:79.60px;height:30.00px;background:#fff;border:2px solid #3a3a3a;box-sizing:border-box;"></div>
<span style="position:absolute;left:2279.01px;top:1657.73px;font-family:&quot;DejaVu Sans&quot;, &quot;Liberation Sans&quot;, sans-serif;font-size:21px;line-height:1;white-space:pre;color:#000;font-weight:700;transform:scaleX(0.92);transform-origin:0 0;">1.7%</span>
<div style="position:absolute;left:2370.40px;top:1654.00px;width:80.20px;height:30.00px;background:#fff;border:2px solid #3a3a3a;box-sizing:border-box;"></div>
<span style="position:absolute;left:2383.70px;top:1662.23px;font-family:&quot;DejaVu Sans&quot;, &quot;Liberation Sans&quot;, sans-serif;font-size:21px;line-height:1;white-space:pre;color:#000;font-weight:700;transform:scaleX(0.92);transform-origin:0 0;">0.0%</span>
<div style="position:absolute;left:2345.60px;top:1666.50px;width:12.00px;height:1.20px;background:#555;"></div>
<div style="position:absolute;left:2357.00px;top:1666.50px;width:1.20px;height:6.00px;background:#555;"></div>
<div style="position:absolute;left:11.00px;top:277.60px;width:2849.20px;height:27.50px;background:#0a0a0a;"></div>
<div style="position:absolute;left:11.00px;top:305.00px;width:42.30px;height:1365.30px;background:#0a0a0a;"></div>
<div style="position:absolute;left:53.30px;top:304.20px;width:2807.30px;height:1.00px;background:#707070;"></div>
<svg style="left:30px;top:282px" width="21" height="20"><polygon points="20,0.5 20,19.5 0.5,19.5" fill="#5a5a5a"/></svg>
<div style="position:absolute;left:53.90px;top:277.60px;width:29.10px;height:27.50px;background:#5f5f5f;border-bottom:2px solid #1e7145;box-sizing:border-box;"></div>
<div style="position:absolute;left:11.00px;top:305.60px;width:42.30px;height:43.40px;background:#6b6b6b;border-right:2px solid #1e7145;box-sizing:border-box;"></div>
<span style="position:absolute;left:61.31px;top:281.39px;font-family:&quot;Liberation Sans&quot;, sans-serif;font-size:22px;line-height:1;white-space:pre;color:#ffffff;">A</span>
<div style="position:absolute;left:82.50px;top:279.00px;width:1.00px;height:26.00px;background:#5a5a5a;"></div>
<span style="position:absolute;left:98.61px;top:281.39px;font-family:&quot;Liberation Sans&quot;, sans-serif;font-size:22px;line-height:1;white-space:pre;color:#e4e4e4;">B</span>
<div style="position:absolute;left:127.40px;top:279.00px;width:1.00px;height:26.00px;background:#5a5a5a;"></div>
<span style="position:absolute;left:142.90px;top:281.39px;font-family:&quot;Liberation Sans&quot;, sans-serif;font-size:22px;line-height:1;white-space:pre;color:#e4e4e4;">C</span>
<div style="position:absolute;left:172.30px;top:279.00px;width:1.00px;height:26.00px;background:#5a5a5a;"></div>
<span style="position:absolute;left:187.80px;top:281.39px;font-family:&quot;Liberation Sans&quot;, sans-serif;font-size:22px;line-height:1;white-space:pre;color:#e4e4e4;">D</span>
<div style="position:absolute;left:217.20px;top:279.00px;width:1.00px;height:26.00px;background:#5a5a5a;"></div>
<span style="position:absolute;left:233.31px;top:281.39px;font-family:&quot;Liberation Sans&quot;, sans-serif;font-size:22px;line-height:1;white-space:pre;color:#e4e4e4;">E</span>
<div style="position:absolute;left:262.10px;top:279.00px;width:1.00px;height:26.00px;background:#5a5a5a;"></div>
<span style="position:absolute;left:278.82px;top:281.39px;font-family:&quot;Liberation Sans&quot;, sans-serif;font-size:22px;line-height:1;white-space:pre;color:#e4e4e4;">F</span>
<div style="position:absolute;left:307.00px;top:279.00px;width:1.00px;height:26.00px;background:#5a5a5a;"></div>
<span style="position:absolute;left:321.89px;top:281.39px;font-family:&quot;Liberation Sans&quot;, sans-serif;font-size:22px;line-height:1;white-space:pre;color:#e4e4e4;">G</span>
<div style="position:absolute;left:351.90px;top:279.00px;width:1.00px;height:26.00px;background:#5a5a5a;"></div>
<span style="position:absolute;left:367.40px;top:281.39px;font-family:&quot;Liberation Sans&quot;, sans-serif;font-size:22px;line-height:1;white-space:pre;color:#e4e4e4;">H</span>
<div style="position:absolute;left:396.90px;top:279.00px;width:1.00px;height:26.00px;background:#5a5a5a;"></div>
<span style="position:absolute;left:497.79px;top:281.39px;font-family:&quot;Liberation Sans&quot;, sans-serif;font-size:22px;line-height:1;white-space:pre;color:#e4e4e4;">I</span>
<div style="position:absolute;left:602.80px;top:279.00px;width:1.00px;height:26.00px;background:#5a5a5a;"></div>
<span style="position:absolute;left:701.35px;top:281.39px;font-family:&quot;Liberation Sans&quot;, sans-serif;font-size:22px;line-height:1;white-space:pre;color:#e4e4e4;">J</span>
<div style="position:absolute;left:808.90px;top:279.00px;width:1.00px;height:26.00px;background:#5a5a5a;"></div>
<span style="position:absolute;left:905.61px;top:281.39px;font-family:&quot;Liberation Sans&quot;, sans-serif;font-size:22px;line-height:1;white-space:pre;color:#e4e4e4;">K</span>
<div style="position:absolute;left:1015.00px;top:279.00px;width:1.00px;height:26.00px;background:#5a5a5a;"></div>
<span style="position:absolute;left:1112.92px;top:281.39px;font-family:&quot;Liberation Sans&quot;, sans-serif;font-size:22px;line-height:1;white-space:pre;color:#e4e4e4;">L</span>
<div style="position:absolute;left:1221.10px;top:279.00px;width:1.00px;height:26.00px;background:#5a5a5a;"></div>
<span style="position:absolute;left:1315.99px;top:281.39px;font-family:&quot;Liberation Sans&quot;, sans-serif;font-size:22px;line-height:1;white-space:pre;color:#e4e4e4;">M</span>
<div style="position:absolute;left:1427.20px;top:279.00px;width:1.00px;height:26.00px;background:#5a5a5a;"></div>
<span style="position:absolute;left:1523.30px;top:281.39px;font-family:&quot;Liberation Sans&quot;, sans-serif;font-size:22px;line-height:1;white-space:pre;color:#e4e4e4;">N</span>
<div style="position:absolute;left:1633.30px;top:279.00px;width:1.00px;height:26.00px;background:#5a5a5a;"></div>
<span style="position:absolute;left:1728.64px;top:281.39px;font-family:&quot;Liberation Sans&quot;, sans-serif;font-size:22px;line-height:1;white-space:pre;color:#e4e4e4;">O</span>
<div style="position:absolute;left:1839.10px;top:279.00px;width:1.00px;height:26.00px;background:#5a5a5a;"></div>
<span style="position:absolute;left:1860.21px;top:281.39px;font-family:&quot;Liberation Sans&quot;, sans-serif;font-size:22px;line-height:1;white-space:pre;color:#e4e4e4;">P</span>
<div style="position:absolute;left:1894.00px;top:279.00px;width:1.00px;height:26.00px;background:#5a5a5a;"></div>
<span style="position:absolute;left:1967.44px;top:281.39px;font-family:&quot;Liberation Sans&quot;, sans-serif;font-size:22px;line-height:1;white-space:pre;color:#e4e4e4;">Q</span>
<div style="position:absolute;left:2056.00px;top:279.00px;width:1.00px;height:26.00px;background:#5a5a5a;"></div>
<span style="position:absolute;left:2130.05px;top:281.39px;font-family:&quot;Liberation Sans&quot;, sans-serif;font-size:22px;line-height:1;white-space:pre;color:#e4e4e4;">R</span>
<div style="position:absolute;left:2218.00px;top:279.00px;width:1.00px;height:26.00px;background:#5a5a5a;"></div>
<span style="position:absolute;left:2292.66px;top:281.39px;font-family:&quot;Liberation Sans&quot;, sans-serif;font-size:22px;line-height:1;white-space:pre;color:#e4e4e4;">S</span>
<div style="position:absolute;left:2380.00px;top:279.00px;width:1.00px;height:26.00px;background:#5a5a5a;"></div>
<span style="position:absolute;left:2455.27px;top:281.39px;font-family:&quot;Liberation Sans&quot;, sans-serif;font-size:22px;line-height:1;white-space:pre;color:#e4e4e4;">T</span>
<div style="position:absolute;left:2542.00px;top:279.00px;width:1.00px;height:26.00px;background:#5a5a5a;"></div>
<span style="position:absolute;left:2616.05px;top:281.39px;font-family:&quot;Liberation Sans&quot;, sans-serif;font-size:22px;line-height:1;white-space:pre;color:#e4e4e4;">U</span>
<div style="position:absolute;left:2704.00px;top:279.00px;width:1.00px;height:26.00px;background:#5a5a5a;"></div>
<span style="position:absolute;left:2769.16px;top:281.39px;font-family:&quot;Liberation Sans&quot;, sans-serif;font-size:22px;line-height:1;white-space:pre;color:#e4e4e4;">V</span>
<div style="position:absolute;left:2847.00px;top:279.00px;width:1.00px;height:26.00px;background:#5a5a5a;"></div>
<div style="position:absolute;left:2847.5px;top:277.6px;width:9.8px;height:27.5px;overflow:hidden">
<span style="position:absolute;left:1px;top:1.5px;font-size:22px;line-height:1;color:#e4e4e4;font-family:"Liberation Sans", sans-serif">W</span></div>
<div style="position:absolute;left:11.00px;top:349.00px;width:42.30px;height:1.00px;background:#4e4e4e;"></div>
<span style="position:absolute;left:26.60px;top:325.56px;font-family:&quot;Liberation Sans&quot;, sans-serif;font-size:20.5px;line-height:1;white-space:pre;color:#ffffff;">1</span>
<div style="position:absolute;left:11.00px;top:389.00px;width:42.30px;height:1.00px;background:#4e4e4e;"></div>
<span style="position:absolute;left:26.60px;top:365.66px;font-family:&quot;Liberation Sans&quot;, sans-serif;font-size:20.5px;line-height:1;white-space:pre;color:#e4e4e4;">2</span>
<div style="position:absolute;left:11.00px;top:430.00px;width:42.30px;height:1.00px;background:#4e4e4e;"></div>
<span style="position:absolute;left:26.60px;top:406.56px;font-family:&quot;Liberation Sans&quot;, sans-serif;font-size:20.5px;line-height:1;white-space:pre;color:#e4e4e4;">3</span>
<div style="position:absolute;left:11.00px;top:459.00px;width:42.30px;height:1.00px;background:#4e4e4e;"></div>
<span style="position:absolute;left:26.60px;top:435.56px;font-family:&quot;Liberation Sans&quot;, sans-serif;font-size:20.5px;line-height:1;white-space:pre;color:#e4e4e4;">4</span>
<div style="position:absolute;left:11.00px;top:501.00px;width:42.30px;height:1.00px;background:#4e4e4e;"></div>
<span style="position:absolute;left:26.60px;top:477.66px;font-family:&quot;Liberation Sans&quot;, sans-serif;font-size:20.5px;line-height:1;white-space:pre;color:#e4e4e4;">5</span>
<div style="position:absolute;left:11.00px;top:536.00px;width:42.30px;height:1.00px;background:#4e4e4e;"></div>
<span style="position:absolute;left:26.60px;top:512.66px;font-family:&quot;Liberation Sans&quot;, sans-serif;font-size:20.5px;line-height:1;white-space:pre;color:#e4e4e4;">6</span>
<div style="position:absolute;left:11.00px;top:565.00px;width:42.30px;height:1.00px;background:#4e4e4e;"></div>
<span style="position:absolute;left:26.60px;top:541.66px;font-family:&quot;Liberation Sans&quot;, sans-serif;font-size:20.5px;line-height:1;white-space:pre;color:#e4e4e4;">7</span>
<div style="position:absolute;left:11.00px;top:565.40px;width:42.30px;height:1.00px;background:#444;"></div>
<div style="position:absolute;left:11.00px;top:600.00px;width:42.30px;height:1.00px;background:#4e4e4e;"></div>
<span style="position:absolute;left:26.60px;top:576.76px;font-family:&quot;Liberation Sans&quot;, sans-serif;font-size:20.5px;line-height:1;white-space:pre;color:#e4e4e4;">9</span>
<div style="position:absolute;left:11.00px;top:629.00px;width:42.30px;height:1.00px;background:#4e4e4e;"></div>
<span style="position:absolute;left:20.89px;top:605.76px;font-family:&quot;Liberation Sans&quot;, sans-serif;font-size:20.5px;line-height:1;white-space:pre;color:#e4e4e4;">10</span>
<div style="position:absolute;left:11.00px;top:658.00px;width:42.30px;height:1.00px;background:#4e4e4e;"></div>
<span style="position:absolute;left:21.66px;top:634.76px;font-family:&quot;Liberation Sans&quot;, sans-serif;font-size:20.5px;line-height:1;white-space:pre;color:#e4e4e4;">11</span>
<div style="position:absolute;left:11.00px;top:687.00px;width:42.30px;height:1.00px;background:#4e4e4e;"></div>
<span style="position:absolute;left:20.89px;top:663.76px;font-family:&quot;Liberation Sans&quot;, sans-serif;font-size:20.5px;line-height:1;white-space:pre;color:#e4e4e4;">12</span>
<div style="position:absolute;left:11.00px;top:716.00px;width:42.30px;height:1.00px;background:#4e4e4e;"></div>
<span style="position:absolute;left:20.89px;top:692.86px;font-family:&quot;Liberation Sans&quot;, sans-serif;font-size:20.5px;line-height:1;white-space:pre;color:#e4e4e4;">13</span>
<div style="position:absolute;left:11.00px;top:745.00px;width:42.30px;height:1.00px;background:#4e4e4e;"></div>
<span style="position:absolute;left:20.89px;top:721.96px;font-family:&quot;Liberation Sans&quot;, sans-serif;font-size:20.5px;line-height:1;white-space:pre;color:#e4e4e4;">14</span>
<div style="position:absolute;left:11.00px;top:767.00px;width:42.30px;height:1.00px;background:#4e4e4e;"></div>
<div style="position:absolute;left:11px;top:746.7px;width:42px;height:20.7px;overflow:hidden">
<span style="position:absolute;left:9.5px;top:-0.0px;font-size:20.5px;line-height:1;color:#e4e4e4;font-family:"Liberation Sans", sans-serif">15</span></div>
<div style="position:absolute;left:11.00px;top:809.00px;width:42.30px;height:1.00px;background:#4e4e4e;"></div>
<span style="position:absolute;left:20.89px;top:785.46px;font-family:&quot;Liberation Sans&quot;, sans-serif;font-size:20.5px;line-height:1;white-space:pre;color:#e4e4e4;">16</span>
<div style="position:absolute;left:11.00px;top:838.00px;width:42.30px;height:1.00px;background:#4e4e4e;"></div>
<span style="position:absolute;left:20.89px;top:814.76px;font-family:&quot;Liberation Sans&quot;, sans-serif;font-size:20.5px;line-height:1;white-space:pre;color:#e4e4e4;">17</span>
<div style="position:absolute;left:11.00px;top:867.00px;width:42.30px;height:1.00px;background:#4e4e4e;"></div>
<span style="position:absolute;left:20.89px;top:843.74px;font-family:&quot;Liberation Sans&quot;, sans-serif;font-size:20.5px;line-height:1;white-space:pre;color:#e4e4e4;">18</span>
<div style="position:absolute;left:11.00px;top:896.00px;width:42.30px;height:1.00px;background:#4e4e4e;"></div>
<span style="position:absolute;left:20.89px;top:872.73px;font-family:&quot;Liberation Sans&quot;, sans-serif;font-size:20.5px;line-height:1;white-space:pre;color:#e4e4e4;">19</span>
<div style="position:absolute;left:11.00px;top:925.00px;width:42.30px;height:1.00px;background:#4e4e4e;"></div>
<span style="position:absolute;left:20.89px;top:901.71px;font-family:&quot;Liberation Sans&quot;, sans-serif;font-size:20.5px;line-height:1;white-space:pre;color:#e4e4e4;">20</span>
<div style="position:absolute;left:11.00px;top:954.00px;width:42.30px;height:1.00px;background:#4e4e4e;"></div>
<span style="position:absolute;left:20.89px;top:930.70px;font-family:&quot;Liberation Sans&quot;, sans-serif;font-size:20.5px;line-height:1;white-space:pre;color:#e4e4e4;">21</span>
<div style="position:absolute;left:11.00px;top:983.00px;width:42.30px;height:1.00px;background:#4e4e4e;"></div>
<span style="position:absolute;left:20.89px;top:959.68px;font-family:&quot;Liberation Sans&quot;, sans-serif;font-size:20.5px;line-height:1;white-space:pre;color:#e4e4e4;">22</span>
<div style="position:absolute;left:11.00px;top:1012.00px;width:42.30px;height:1.00px;background:#4e4e4e;"></div>
<span style="position:absolute;left:20.89px;top:988.67px;font-family:&quot;Liberation Sans&quot;, sans-serif;font-size:20.5px;line-height:1;white-space:pre;color:#e4e4e4;">23</span>
<div style="position:absolute;left:11.00px;top:1041.00px;width:42.30px;height:1.00px;background:#4e4e4e;"></div>
<span style="position:absolute;left:20.89px;top:1017.65px;font-family:&quot;Liberation Sans&quot;, sans-serif;font-size:20.5px;line-height:1;white-space:pre;color:#e4e4e4;">24</span>
<div style="position:absolute;left:11.00px;top:1070.00px;width:42.30px;height:1.00px;background:#4e4e4e;"></div>
<span style="position:absolute;left:20.89px;top:1046.64px;font-family:&quot;Liberation Sans&quot;, sans-serif;font-size:20.5px;line-height:1;white-space:pre;color:#e4e4e4;">25</span>
<div style="position:absolute;left:11.00px;top:1099.00px;width:42.30px;height:1.00px;background:#4e4e4e;"></div>
<span style="position:absolute;left:20.89px;top:1075.62px;font-family:&quot;Liberation Sans&quot;, sans-serif;font-size:20.5px;line-height:1;white-space:pre;color:#e4e4e4;">26</span>
<div style="position:absolute;left:11.00px;top:1128.00px;width:42.30px;height:1.00px;background:#4e4e4e;"></div>
<span style="position:absolute;left:20.89px;top:1104.61px;font-family:&quot;Liberation Sans&quot;, sans-serif;font-size:20.5px;line-height:1;white-space:pre;color:#e4e4e4;">27</span>
<div style="position:absolute;left:11.00px;top:1157.00px;width:42.30px;height:1.00px;background:#4e4e4e;"></div>
<span style="position:absolute;left:20.89px;top:1133.59px;font-family:&quot;Liberation Sans&quot;, sans-serif;font-size:20.5px;line-height:1;white-space:pre;color:#e4e4e4;">28</span>
<div style="position:absolute;left:11.00px;top:1186.00px;width:42.30px;height:1.00px;background:#4e4e4e;"></div>
<span style="position:absolute;left:20.89px;top:1162.58px;font-family:&quot;Liberation Sans&quot;, sans-serif;font-size:20.5px;line-height:1;white-space:pre;color:#e4e4e4;">29</span>
<div style="position:absolute;left:11.00px;top:1215.00px;width:42.30px;height:1.00px;background:#4e4e4e;"></div>
<span style="position:absolute;left:20.89px;top:1191.56px;font-family:&quot;Liberation Sans&quot;, sans-serif;font-size:20.5px;line-height:1;white-space:pre;color:#e4e4e4;">30</span>
<div style="position:absolute;left:11.00px;top:1244.00px;width:42.30px;height:1.00px;background:#4e4e4e;"></div>
<span style="position:absolute;left:20.89px;top:1220.55px;font-family:&quot;Liberation Sans&quot;, sans-serif;font-size:20.5px;line-height:1;white-space:pre;color:#e4e4e4;">31</span>
<div style="position:absolute;left:11.00px;top:1273.00px;width:42.30px;height:1.00px;background:#4e4e4e;"></div>
<span style="position:absolute;left:20.89px;top:1249.53px;font-family:&quot;Liberation Sans&quot;, sans-serif;font-size:20.5px;line-height:1;white-space:pre;color:#e4e4e4;">32</span>
<div style="position:absolute;left:11.00px;top:1302.00px;width:42.30px;height:1.00px;background:#4e4e4e;"></div>
<span style="position:absolute;left:20.89px;top:1278.52px;font-family:&quot;Liberation Sans&quot;, sans-serif;font-size:20.5px;line-height:1;white-space:pre;color:#e4e4e4;">33</span>
<div style="position:absolute;left:11.00px;top:1331.00px;width:42.30px;height:1.00px;background:#4e4e4e;"></div>
<span style="position:absolute;left:20.89px;top:1307.50px;font-family:&quot;Liberation Sans&quot;, sans-serif;font-size:20.5px;line-height:1;white-space:pre;color:#e4e4e4;">34</span>
<div style="position:absolute;left:11.00px;top:1360.00px;width:42.30px;height:1.00px;background:#4e4e4e;"></div>
<span style="position:absolute;left:20.89px;top:1336.49px;font-family:&quot;Liberation Sans&quot;, sans-serif;font-size:20.5px;line-height:1;white-space:pre;color:#e4e4e4;">35</span>
<div style="position:absolute;left:11.00px;top:1389.00px;width:42.30px;height:1.00px;background:#4e4e4e;"></div>
<span style="position:absolute;left:20.89px;top:1365.47px;font-family:&quot;Liberation Sans&quot;, sans-serif;font-size:20.5px;line-height:1;white-space:pre;color:#e4e4e4;">36</span>
<div style="position:absolute;left:11.00px;top:1418.00px;width:42.30px;height:1.00px;background:#4e4e4e;"></div>
<span style="position:absolute;left:20.89px;top:1394.46px;font-family:&quot;Liberation Sans&quot;, sans-serif;font-size:20.5px;line-height:1;white-space:pre;color:#e4e4e4;">37</span>
<div style="position:absolute;left:11.00px;top:1447.00px;width:42.30px;height:1.00px;background:#4e4e4e;"></div>
<span style="position:absolute;left:20.89px;top:1423.44px;font-family:&quot;Liberation Sans&quot;, sans-serif;font-size:20.5px;line-height:1;white-space:pre;color:#e4e4e4;">38</span>
<div style="position:absolute;left:11.00px;top:1476.00px;width:42.30px;height:1.00px;background:#4e4e4e;"></div>
<span style="position:absolute;left:20.89px;top:1452.43px;font-family:&quot;Liberation Sans&quot;, sans-serif;font-size:20.5px;line-height:1;white-space:pre;color:#e4e4e4;">39</span>
<div style="position:absolute;left:11.00px;top:1505.00px;width:42.30px;height:1.00px;background:#4e4e4e;"></div>
<span style="position:absolute;left:20.89px;top:1481.41px;font-family:&quot;Liberation Sans&quot;, sans-serif;font-size:20.5px;line-height:1;white-space:pre;color:#e4e4e4;">40</span>
<div style="position:absolute;left:11.00px;top:1534.00px;width:42.30px;height:1.00px;background:#4e4e4e;"></div>
<span style="position:absolute;left:20.89px;top:1510.40px;font-family:&quot;Liberation Sans&quot;, sans-serif;font-size:20.5px;line-height:1;white-space:pre;color:#e4e4e4;">41</span>
<div style="position:absolute;left:11.00px;top:1576.00px;width:42.30px;height:1.00px;background:#4e4e4e;"></div>
<span style="position:absolute;left:20.89px;top:1552.66px;font-family:&quot;Liberation Sans&quot;, sans-serif;font-size:20.5px;line-height:1;white-space:pre;color:#e4e4e4;">42</span>
<div style="position:absolute;left:11.00px;top:1606.00px;width:42.30px;height:1.00px;background:#4e4e4e;"></div>
<span style="position:absolute;left:20.89px;top:1582.26px;font-family:&quot;Liberation Sans&quot;, sans-serif;font-size:20.5px;line-height:1;white-space:pre;color:#e4e4e4;">43</span>
<div style="position:absolute;left:11.00px;top:1635.00px;width:42.30px;height:1.00px;background:#4e4e4e;"></div>
<span style="position:absolute;left:20.89px;top:1611.56px;font-family:&quot;Liberation Sans&quot;, sans-serif;font-size:20.5px;line-height:1;white-space:pre;color:#e4e4e4;">44</span>
<div style="position:absolute;left:11.00px;top:1664.00px;width:42.30px;height:1.00px;background:#4e4e4e;"></div>
<span style="position:absolute;left:20.89px;top:1640.56px;font-family:&quot;Liberation Sans&quot;, sans-serif;font-size:20.5px;line-height:1;white-space:pre;color:#e4e4e4;">45</span>
<div style="position:absolute;left:11.00px;top:1670.00px;width:42.30px;height:1.00px;background:#4e4e4e;"></div>
<div style="position:absolute;left:11.00px;top:1670.30px;width:2880.00px;height:47.20px;background:#0a0a0a;"></div>
<div style="position:absolute;left:11.00px;top:1718.20px;width:2880.00px;height:32.60px;background:#141414;"></div>
<div style="position:absolute;left:11.00px;top:1718.00px;width:2880.00px;height:1.00px;background:#2c2c2c;"></div>
<div style="position:absolute;left:2860.20px;top:1670.30px;width:30.80px;height:3.00px;background:#0a0a0a;"></div>
<div style="position:absolute;left:2860.20px;top:277.60px;width:30.80px;height:1394.60px;background:#131313;border-radius:0 0 15px 15px;"></div>
<div style="position:absolute;left:2869.90px;top:303.20px;width:12.00px;height:550.00px;background:#9a9a9a;border-radius:6px;"></div>
<div style="position:absolute;left:177.40px;top:1676.00px;width:88.40px;height:36.30px;background:#fff066;border-radius:7px;"></div>
<span style="position:absolute;left:190.62px;top:1685.51px;font-family:&quot;Liberation Sans&quot;, sans-serif;font-size:20.2px;line-height:1;white-space:pre;color:#1a1a1a;letter-spacing:0.040px;">Payroll</span>
<div style="position:absolute;left:271.80px;top:1679.50px;width:1.20px;height:29.00px;background:#4a4a4a;"></div>
<div style="position:absolute;left:279.20px;top:1676.00px;width:86.50px;height:36.30px;background:#fff066;border-radius:7px;"></div>
<span style="position:absolute;left:290.80px;top:1685.51px;font-family:&quot;Liberation Sans&quot;, sans-serif;font-size:20.2px;line-height:1;white-space:pre;color:#1a1a1a;letter-spacing:-1.291px;">CAPEX</span>
<div style="position:absolute;left:371.70px;top:1679.50px;width:1.20px;height:29.00px;background:#4a4a4a;"></div>
<div style="position:absolute;left:379.00px;top:1676.00px;width:112.90px;height:36.30px;background:#fff066;border-radius:7px;"></div>
<span style="position:absolute;left:392.28px;top:1685.51px;font-family:&quot;Liberation Sans&quot;, sans-serif;font-size:20.2px;line-height:1;white-space:pre;color:#1a1a1a;letter-spacing:0.150px;">CapTable</span>
<div style="position:absolute;left:497.90px;top:1679.50px;width:1.20px;height:29.00px;background:#4a4a4a;"></div>
<div style="position:absolute;left:505.30px;top:1676.00px;width:89.70px;height:36.30px;background:#fff066;border-radius:7px;"></div>
<span style="position:absolute;left:518.02px;top:1685.51px;font-family:&quot;Liberation Sans&quot;, sans-serif;font-size:20.2px;line-height:1;white-space:pre;color:#1a1a1a;letter-spacing:0.237px;">Capital</span>
<div style="position:absolute;left:601.00px;top:1679.50px;width:1.20px;height:29.00px;background:#4a4a4a;"></div>
<div style="position:absolute;left:608.00px;top:1676.00px;width:42.20px;height:36.30px;background:#49b2e8;border-radius:7px;"></div>
<span style="position:absolute;left:620.33px;top:1685.51px;font-family:&quot;Liberation Sans&quot;, sans-serif;font-size:20.2px;line-height:1;white-space:pre;color:#1a1a1a;letter-spacing:-1.539px;">IS</span>
<div style="position:absolute;left:656.20px;top:1679.50px;width:1.20px;height:29.00px;background:#4a4a4a;"></div>
<div style="position:absolute;left:663.00px;top:1676.00px;width:48.00px;height:36.30px;background:#49b2e8;border-radius:7px;"></div>
<span style="position:absolute;left:674.52px;top:1685.51px;font-family:&quot;Liberation Sans&quot;, sans-serif;font-size:20.2px;line-height:1;white-space:pre;color:#1a1a1a;letter-spacing:-1.961px;">CF</span>
<div style="position:absolute;left:717.00px;top:1679.50px;width:1.20px;height:29.00px;background:#4a4a4a;"></div>
<div style="position:absolute;left:724.00px;top:1676.00px;width:48.00px;height:36.30px;background:#49b2e8;border-radius:7px;"></div>
<span style="position:absolute;left:735.64px;top:1685.51px;font-family:&quot;Liberation Sans&quot;, sans-serif;font-size:20.2px;line-height:1;white-space:pre;color:#1a1a1a;letter-spacing:-2.219px;">BS</span>
<div style="position:absolute;left:778.00px;top:1679.50px;width:1.20px;height:29.00px;background:#4a4a4a;"></div>
<div style="position:absolute;left:785.00px;top:1676.00px;width:114.80px;height:36.30px;background:#49b2e8;border-radius:7px;"></div>
<span style="position:absolute;left:798.30px;top:1685.51px;font-family:&quot;Liberation Sans&quot;, sans-serif;font-size:20.2px;line-height:1;white-space:pre;color:#1a1a1a;letter-spacing:-0.198px;">Scenarios</span>
<div style="position:absolute;left:905.80px;top:1679.50px;width:1.20px;height:29.00px;background:#4a4a4a;"></div>
<div style="position:absolute;left:913.00px;top:1676.00px;width:114.80px;height:36.30px;background:#49b2e8;border-radius:7px;"></div>
<span style="position:absolute;left:926.70px;top:1685.51px;font-family:&quot;Liberation Sans&quot;, sans-serif;font-size:20.2px;line-height:1;white-space:pre;color:#1a1a1a;letter-spacing:0.590px;">Valuation</span>
<div style="position:absolute;left:1033.80px;top:1679.50px;width:1.20px;height:29.00px;background:#4a4a4a;"></div>
<div style="position:absolute;left:1040.80px;top:1676.00px;width:114.10px;height:36.30px;background:#49b2e8;border-radius:7px;"></div>
<span style="position:absolute;left:1054.18px;top:1685.51px;font-family:&quot;Liberation Sans&quot;, sans-serif;font-size:20.2px;line-height:1;white-space:pre;color:#1a1a1a;letter-spacing:0.161px;">Summary</span>
<div style="position:absolute;left:1160.90px;top:1679.50px;width:1.20px;height:29.00px;background:#4a4a4a;"></div>
<div style="position:absolute;left:1167.90px;top:1676.00px;width:47.80px;height:36.30px;background:#49b2e8;border-radius:7px;"></div>
<span style="position:absolute;left:1179.57px;top:1685.51px;font-family:&quot;Liberation Sans&quot;, sans-serif;font-size:20.2px;line-height:1;white-space:pre;color:#1a1a1a;letter-spacing:-2.469px;">BE</span>
<div style="position:absolute;left:1221.70px;top:1679.50px;width:1.20px;height:29.00px;background:#4a4a4a;"></div>
<div style="position:absolute;left:1228.70px;top:1676.00px;width:72.30px;height:36.30px;background:#49b2e8;border-radius:7px;"></div>
<span style="position:absolute;left:1241.10px;top:1685.51px;font-family:&quot;Liberation Sans&quot;, sans-serif;font-size:20.2px;line-height:1;white-space:pre;color:#1a1a1a;letter-spacing:-0.992px;">ROIC</span>
<div style="position:absolute;left:1307.00px;top:1679.50px;width:1.20px;height:29.00px;background:#4a4a4a;"></div>
<div style="position:absolute;left:1314.00px;top:1676.00px;width:84.80px;height:36.30px;background:#49b2e8;border-radius:7px;"></div>
<span style="position:absolute;left:1326.86px;top:1685.51px;font-family:&quot;Liberation Sans&quot;, sans-serif;font-size:20.2px;line-height:1;white-space:pre;color:#1a1a1a;letter-spacing:-0.078px;">Charts</span>
<div style="position:absolute;left:1404.80px;top:1679.50px;width:1.20px;height:29.00px;background:#4a4a4a;"></div>
<div style="position:absolute;left:1411.80px;top:1676.00px;width:64.10px;height:36.30px;background:#49b2e8;border-radius:7px;"></div>
<span style="position:absolute;left:1424.27px;top:1685.51px;font-family:&quot;Liberation Sans&quot;, sans-serif;font-size:20.2px;line-height:1;white-space:pre;color:#1a1a1a;letter-spacing:-1.160px;">KPIs</span>
<div style="position:absolute;left:1481.90px;top:1679.50px;width:1.20px;height:29.00px;background:#4a4a4a;"></div>
<div style="position:absolute;left:1488.90px;top:1676.00px;width:168.80px;height:36.30px;background:#49b2e8;border-radius:7px;"></div>
<span style="position:absolute;left:1501.51px;top:1685.51px;font-family:&quot;Liberation Sans&quot;, sans-serif;font-size:20.2px;line-height:1;white-space:pre;color:#1a1a1a;letter-spacing:-0.088px;">Sources &amp; Uses</span>
<div style="position:absolute;left:1663.70px;top:1679.50px;width:1.20px;height:29.00px;background:#4a4a4a;"></div>
<div style="position:absolute;left:1670.70px;top:1676.00px;width:83.20px;height:36.30px;background:#49b2e8;border-radius:7px;"></div>
<span style="position:absolute;left:1683.99px;top:1685.51px;font-family:&quot;Liberation Sans&quot;, sans-serif;font-size:20.2px;line-height:1;white-space:pre;color:#1a1a1a;letter-spacing:-0.122px;">Ratios</span>
<div style="position:absolute;left:1759.90px;top:1679.50px;width:1.20px;height:29.00px;background:#4a4a4a;"></div>
<div style="position:absolute;left:1766.90px;top:1676.00px;width:95.80px;height:36.30px;background:#49b2e8;border-radius:7px;"></div>
<span style="position:absolute;left:1780.02px;top:1685.51px;font-family:&quot;Liberation Sans&quot;, sans-serif;font-size:20.2px;line-height:1;white-space:pre;color:#1a1a1a;letter-spacing:0.443px;">DuPont</span>
<div style="position:absolute;left:1868.70px;top:1679.50px;width:1.20px;height:29.00px;background:#4a4a4a;"></div>
<div style="position:absolute;left:1866.00px;top:1670.30px;width:170.00px;height:9.00px;background:#ffffff;"></div>
<div style="position:absolute;left:1856.00px;top:1670.30px;width:18.90px;height:9.00px;background:#0a0a0a;border-top-right-radius:8px;"></div>
<div style="position:absolute;left:2027.70px;top:1670.30px;width:18.00px;height:9.00px;background:#0a0a0a;border-top-left-radius:8px;"></div>
<div style="position:absolute;left:1876.40px;top:1670.30px;width:150.30px;height:42.40px;background:linear-gradient(#ffffff 35%,#d4e7f8);border-radius:0 0 8px 8px;"></div>
<span style="position:absolute;left:1888.11px;top:1681.41px;font-family:&quot;Liberation Sans&quot;, sans-serif;font-size:20.2px;line-height:1;white-space:pre;color:#1a1a1a;letter-spacing:0.219px;">Top_Revenue</span>
<div style="position:absolute;left:1888.00px;top:1704.80px;width:127.00px;height:2.60px;background:#1e8a4c;"></div>
<div style="position:absolute;left:2033.50px;top:1679.50px;width:1.20px;height:29.00px;background:#4a4a4a;"></div>
<div style="position:absolute;left:2040.4px;top:1676px;width:31.5px;height:36.3px;overflow:hidden"><div style="position:absolute;left:0;top:0;width:120px;height:36.3px;background:#49b2e8;border-radius:7px"></div>
<span style="position:absolute;left:14px;top:9.5px;font-size:20.2px;line-height:1;color:#1a1a1a;font-family:"Liberation Sans", sans-serif">Top_Expenses</span></div>
<div style="position:absolute;left:2216.00px;top:1680.50px;width:643.50px;height:25.00px;background:#161616;border-radius:12.5px;"></div>
<div style="position:absolute;left:2242.30px;top:1687.00px;width:507.30px;height:11.60px;background:#9a9a9a;border-radius:6px;"></div>
<span style="position:absolute;left:27.20px;top:1727.80px;font-family:&quot;Liberation Sans&quot;, sans-serif;font-size:15.6px;line-height:1;white-space:pre;color:#e8e8e8;letter-spacing:-0.516px;">Ready</span>
<span style="position:absolute;left:173.30px;top:1727.80px;font-family:&quot;Liberation Sans&quot;, sans-serif;font-size:15.6px;line-height:1;white-space:pre;color:#f0f0f0;font-weight:700;letter-spacing:0.044px;">Accessibility: Investigate</span>
<div style="position:absolute;left:2445.00px;top:1718.50px;width:60.00px;height:32.00px;background:#262626;"></div>
<span style="position:absolute;left:2840.70px;top:1728.44px;font-family:&quot;Liberation Sans&quot;, sans-serif;font-size:15.2px;line-height:1;white-space:pre;color:#e8e8e8;letter-spacing:-0.090px;">140%</span>
<svg style="left:0;top:0" width="2902" height="1762"><path d="M2869.4 294.2L2882 294.2L2875.7 286.2Z" fill="#b0b0b0" stroke="#b0b0b0" stroke-width="1.5" stroke-linejoin="round"/><path d="M2870.3 1656L2881.3 1656L2875.8 1663.5Z" fill="#a0a0a0" stroke="#a0a0a0" stroke-width="1.5" stroke-linejoin="round"/><path d="M53.5 1685.8L46.8 1692.8L53.5 1699.8" fill="none" stroke="#d8d8d8" stroke-width="1.7" stroke-linejoin="round" stroke-linecap="round" /><path d="M96 1685.8L102.7 1692.8L96 1699.8" fill="none" stroke="#d8d8d8" stroke-width="1.7" stroke-linejoin="round" stroke-linecap="round" /><circle cx="140.4" cy="1692.8" r="1.9" fill="#d8d8d8"/><circle cx="146" cy="1692.8" r="1.9" fill="#d8d8d8"/><circle cx="151.6" cy="1692.8" r="1.9" fill="#d8d8d8"/><circle cx="2089.4" cy="1692.8" r="1.9" fill="#d8d8d8"/><circle cx="2095" cy="1692.8" r="1.9" fill="#d8d8d8"/><circle cx="2100.6" cy="1692.8" r="1.9" fill="#d8d8d8"/><path d="M2134.5 1692.8H2152M2143.2 1684V1701.5" fill="none" stroke="#d8d8d8" stroke-width="1.6" stroke-linejoin="round" stroke-linecap="round" /><rect x="2189.8" y="1684.6" width="3.4" height="3.4" fill="#d8d8d8"/><rect x="2189.8" y="1691.1" width="3.4" height="3.4" fill="#d8d8d8"/><rect x="2189.8" y="1697.6" width="3.4" height="3.4" fill="#d8d8d8"/><path d="M2234 1687L2234 1698.5L2225.5 1692.8Z" fill="#a8a8a8" stroke="#a8a8a8" stroke-width="1.4" stroke-linejoin="round"/><path d="M2843 1687L2843 1698.5L2851.5 1692.8Z" fill="#a8a8a8" stroke="#a8a8a8" stroke-width="1.4" stroke-linejoin="round"/><rect x="100.0" y="1726.5" width="19.5" height="13.5" rx="0" fill="none" stroke="#e0e0e0" stroke-width="1.4"/><path d="M100.0 1730.3L119.5 1730.3" stroke="#e0e0e0" stroke-width="1.3" stroke-linecap="butt" fill="none"/><path d="M103.0 1734.0L108.0 1734.0" stroke="#e0e0e0" stroke-width="1.2" stroke-linecap="butt" fill="none"/><path d="M103.0 1737.0L107.0 1737.0" stroke="#e0e0e0" stroke-width="1.2" stroke-linecap="butt" fill="none"/><circle cx="115.2" cy="1738" r="4.6" fill="#141414" stroke="#e0e0e0" stroke-width="1.4"/><circle cx="115.2" cy="1738" r="1.7" fill="#e0e0e0"/><circle cx="155" cy="1725.5" r="2.4" fill="none" stroke="#e0e0e0" stroke-width="1.3"/><path d="M147.5 1729.5Q155 1732.5 162.5 1727.5M155 1731.5V1736.5L150 1745M155 1736.5L157.5 1740" fill="none" stroke="#e0e0e0" stroke-width="1.4" stroke-linejoin="round" stroke-linecap="round" /><path d="M158.5 1739.5L166 1746.5M166 1739.5L158.5 1746.5" fill="none" stroke="#e0e0e0" stroke-width="1.4" stroke-linejoin="round" stroke-linecap="round" /><rect x="2465.0" y="1725.5" width="18.5" height="17.0" rx="0" fill="none" stroke="#e8e8e8" stroke-width="2"/><path d="M2471.2 1725.5V1742.5M2477.3 1725.5V1742.5M2465 1731.2H2483.5M2465 1736.8H2483.5" fill="none" stroke="#e8e8e8" stroke-width="1.8" stroke-linejoin="round" stroke-linecap="round" /><rect x="2525.5" y="1725.5" width="19.5" height="17.0" rx="0" fill="none" stroke="#e8e8e8" stroke-width="2"/><rect x="2530.3" y="1729.5" width="10.0" height="11.0" rx="0" fill="none" stroke="#e8e8e8" stroke-width="1.6"/><path d="M2532.5 1732.8H2538M2532.5 1735.3H2538M2532.5 1737.8H2538" fill="none" stroke="#e8e8e8" stroke-width="1" stroke-linejoin="round" stroke-linecap="round" /><rect x="2585.5" y="1725.5" width="19.5" height="17.0" rx="0" fill="none" stroke="#e8e8e8" stroke-width="2"/><path d="M2590.5 1725.5V1734.5H2599V1725.5M2594.7 1725.5V1734.5" fill="none" stroke="#e8e8e8" stroke-width="1.8" stroke-linejoin="round" stroke-linecap="round" /><path d="M2633.5 1734.5L2644.5 1734.5" stroke="#e0e0e0" stroke-width="1.4" stroke-linecap="butt" fill="none"/><path d="M2653.0 1734.8L2801.0 1734.8" stroke="#c8c8c8" stroke-width="1.3" stroke-linecap="butt" fill="none"/><path d="M2726.5 1731.0L2726.5 1738.5" stroke="#c8c8c8" stroke-width="1.3" stroke-linecap="butt" fill="none"/><rect x="2733.2" y="1725.8" width="7.6" height="17.5" rx="1" fill="#c8c8c8"/><path d="M2809 1734.5H2820M2814.5 1729V1740" fill="none" stroke="#e0e0e0" stroke-width="1.4" stroke-linejoin="round" stroke-linecap="round" /></svg>
</body></html>
